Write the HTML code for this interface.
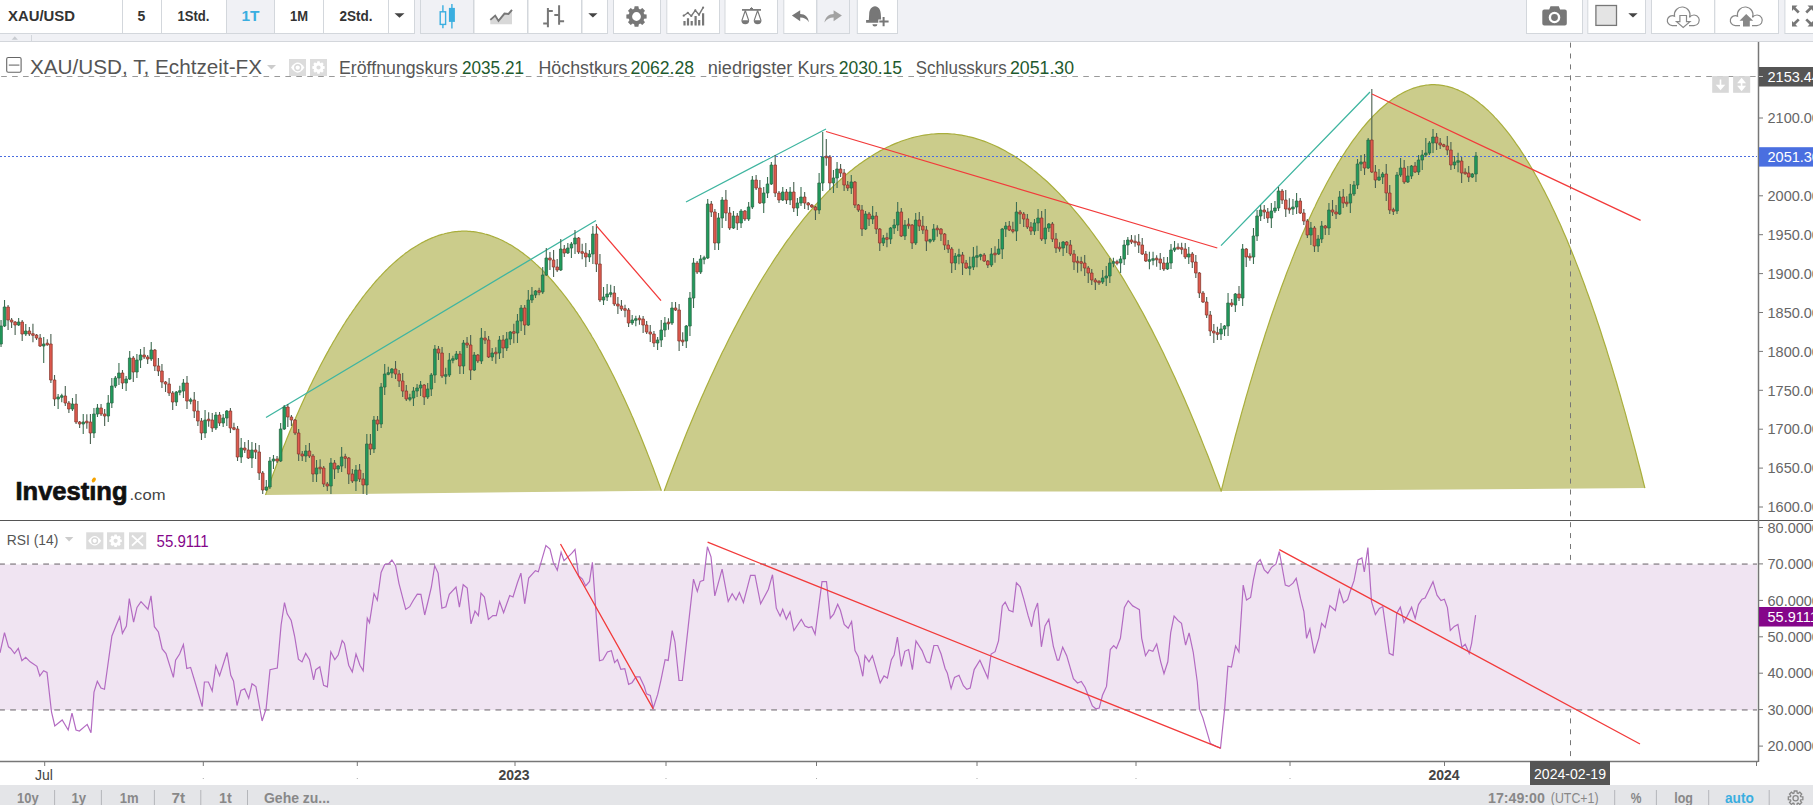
<!DOCTYPE html>
<html><head><meta charset="utf-8"><style>
html,body{margin:0;padding:0;width:1813px;height:805px;overflow:hidden;background:#fff;font-family:"Liberation Sans", sans-serif;}
.abs{position:absolute;}
</style></head><body>
<svg width="1813" height="805" viewBox="0 0 1813 805" style="position:absolute;left:0;top:0" font-family='"Liberation Sans", sans-serif'>
<rect x="0" y="42" width="1813" height="743" fill="#fff"/>
<!-- price pane -->
<path d="M0 76.5H1757" stroke="#999" stroke-width="1" stroke-dasharray="5.6,5.33" stroke-dashoffset="-1.2"/>
<path d="M265.5 495.0L267.1 490.4L268.8 485.8L270.4 481.3L272.1 476.8L273.7 472.4L275.4 468.0L277.0 463.7L278.7 459.4L280.3 455.1L282.0 450.9L283.6 446.8L285.3 442.7L286.9 438.6L288.6 434.6L290.2 430.6L291.9 426.7L293.5 422.8L295.2 419.0L296.8 415.2L298.5 411.4L300.1 407.7L301.8 404.0L303.4 400.4L305.1 396.8L306.7 393.3L308.4 389.8L310.0 386.3L311.7 382.9L313.3 379.6L315.0 376.2L316.6 372.9L318.3 369.7L319.9 366.5L321.6 363.3L323.2 360.2L324.9 357.1L326.5 354.1L328.2 351.1L329.8 348.1L331.5 345.2L333.1 342.3L334.8 339.5L336.4 336.7L338.1 333.9L339.7 331.2L341.4 328.5L343.0 325.9L344.7 323.3L346.3 320.7L348.0 318.2L349.6 315.7L351.3 313.3L352.9 310.8L354.6 308.5L356.2 306.1L357.9 303.8L359.5 301.6L361.2 299.4L362.8 297.2L364.5 295.0L366.1 292.9L367.8 290.8L369.4 288.8L371.1 286.8L372.7 284.8L374.4 282.9L376.0 281.0L377.7 279.2L379.3 277.4L381.0 275.6L382.6 273.8L384.3 272.1L385.9 270.5L387.6 268.8L389.2 267.2L390.9 265.6L392.5 264.1L394.2 262.6L395.8 261.2L397.5 259.7L399.1 258.4L400.8 257.0L402.4 255.7L404.1 254.4L405.7 253.1L407.4 251.9L409.0 250.8L410.7 249.6L412.3 248.5L414.0 247.4L415.6 246.4L417.3 245.4L418.9 244.4L420.6 243.5L422.2 242.6L423.9 241.7L425.5 240.9L427.2 240.1L428.8 239.3L430.5 238.6L432.1 237.9L433.8 237.2L435.4 236.6L437.1 236.0L438.7 235.4L440.4 234.9L442.0 234.4L443.7 234.0L445.3 233.5L447.0 233.2L448.6 232.8L450.3 232.5L451.9 232.2L453.6 231.9L455.2 231.7L456.9 231.6L458.5 231.4L460.2 231.3L461.8 231.2L463.4 231.2L465.1 231.2L466.7 231.2L468.4 231.3L470.0 231.4L471.7 231.6L473.3 231.7L475.0 231.9L476.6 232.2L478.3 232.5L479.9 232.8L481.6 233.1L483.2 233.5L484.9 234.0L486.5 234.4L488.2 234.9L489.8 235.4L491.5 236.0L493.1 236.6L494.8 237.2L496.4 237.9L498.1 238.5L499.7 239.3L501.4 240.0L503.0 240.8L504.7 241.7L506.3 242.5L508.0 243.4L509.6 244.4L511.3 245.3L512.9 246.3L514.6 247.4L516.2 248.5L517.9 249.6L519.5 250.7L521.2 251.9L522.8 253.1L524.5 254.4L526.1 255.6L527.8 257.0L529.4 258.3L531.1 259.7L532.7 261.1L534.4 262.6L536.0 264.1L537.7 265.6L539.3 267.2L541.0 268.8L542.6 270.4L544.3 272.1L545.9 273.8L547.6 275.5L549.2 277.3L550.9 279.1L552.5 281.0L554.2 282.9L555.8 284.8L557.5 286.8L559.1 288.8L560.8 290.8L562.4 292.9L564.1 295.0L565.7 297.1L567.4 299.3L569.0 301.5L570.7 303.8L572.3 306.1L574.0 308.4L575.6 310.8L577.3 313.2L578.9 315.7L580.6 318.2L582.2 320.7L583.9 323.3L585.5 325.9L587.2 328.5L588.8 331.2L590.5 333.9L592.1 336.7L593.8 339.5L595.4 342.3L597.1 345.2L598.7 348.2L600.4 351.1L602.0 354.1L603.7 357.2L605.3 360.2L607.0 363.4L608.6 366.5L610.3 369.8L611.9 373.0L613.6 376.3L615.2 379.6L616.9 383.0L618.5 386.4L620.2 389.9L621.8 393.4L623.5 396.9L625.1 400.5L626.8 404.2L628.4 407.8L630.1 411.5L631.7 415.3L633.4 419.1L635.0 423.0L636.7 426.9L638.3 430.8L640.0 434.8L641.6 438.8L643.3 442.9L644.9 447.0L646.6 451.2L648.2 455.4L649.9 459.6L651.5 463.9L653.2 468.3L654.8 472.7L656.5 477.1L658.1 481.6L659.8 486.1L661.4 490.7Z" fill="#cbcc8b"/><path d="M265.5 495.0L267.1 490.4L268.8 485.8L270.4 481.3L272.1 476.8L273.7 472.4L275.4 468.0L277.0 463.7L278.7 459.4L280.3 455.1L282.0 450.9L283.6 446.8L285.3 442.7L286.9 438.6L288.6 434.6L290.2 430.6L291.9 426.7L293.5 422.8L295.2 419.0L296.8 415.2L298.5 411.4L300.1 407.7L301.8 404.0L303.4 400.4L305.1 396.8L306.7 393.3L308.4 389.8L310.0 386.3L311.7 382.9L313.3 379.6L315.0 376.2L316.6 372.9L318.3 369.7L319.9 366.5L321.6 363.3L323.2 360.2L324.9 357.1L326.5 354.1L328.2 351.1L329.8 348.1L331.5 345.2L333.1 342.3L334.8 339.5L336.4 336.7L338.1 333.9L339.7 331.2L341.4 328.5L343.0 325.9L344.7 323.3L346.3 320.7L348.0 318.2L349.6 315.7L351.3 313.3L352.9 310.8L354.6 308.5L356.2 306.1L357.9 303.8L359.5 301.6L361.2 299.4L362.8 297.2L364.5 295.0L366.1 292.9L367.8 290.8L369.4 288.8L371.1 286.8L372.7 284.8L374.4 282.9L376.0 281.0L377.7 279.2L379.3 277.4L381.0 275.6L382.6 273.8L384.3 272.1L385.9 270.5L387.6 268.8L389.2 267.2L390.9 265.6L392.5 264.1L394.2 262.6L395.8 261.2L397.5 259.7L399.1 258.4L400.8 257.0L402.4 255.7L404.1 254.4L405.7 253.1L407.4 251.9L409.0 250.8L410.7 249.6L412.3 248.5L414.0 247.4L415.6 246.4L417.3 245.4L418.9 244.4L420.6 243.5L422.2 242.6L423.9 241.7L425.5 240.9L427.2 240.1L428.8 239.3L430.5 238.6L432.1 237.9L433.8 237.2L435.4 236.6L437.1 236.0L438.7 235.4L440.4 234.9L442.0 234.4L443.7 234.0L445.3 233.5L447.0 233.2L448.6 232.8L450.3 232.5L451.9 232.2L453.6 231.9L455.2 231.7L456.9 231.6L458.5 231.4L460.2 231.3L461.8 231.2L463.4 231.2L465.1 231.2L466.7 231.2L468.4 231.3L470.0 231.4L471.7 231.6L473.3 231.7L475.0 231.9L476.6 232.2L478.3 232.5L479.9 232.8L481.6 233.1L483.2 233.5L484.9 234.0L486.5 234.4L488.2 234.9L489.8 235.4L491.5 236.0L493.1 236.6L494.8 237.2L496.4 237.9L498.1 238.5L499.7 239.3L501.4 240.0L503.0 240.8L504.7 241.7L506.3 242.5L508.0 243.4L509.6 244.4L511.3 245.3L512.9 246.3L514.6 247.4L516.2 248.5L517.9 249.6L519.5 250.7L521.2 251.9L522.8 253.1L524.5 254.4L526.1 255.6L527.8 257.0L529.4 258.3L531.1 259.7L532.7 261.1L534.4 262.6L536.0 264.1L537.7 265.6L539.3 267.2L541.0 268.8L542.6 270.4L544.3 272.1L545.9 273.8L547.6 275.5L549.2 277.3L550.9 279.1L552.5 281.0L554.2 282.9L555.8 284.8L557.5 286.8L559.1 288.8L560.8 290.8L562.4 292.9L564.1 295.0L565.7 297.1L567.4 299.3L569.0 301.5L570.7 303.8L572.3 306.1L574.0 308.4L575.6 310.8L577.3 313.2L578.9 315.7L580.6 318.2L582.2 320.7L583.9 323.3L585.5 325.9L587.2 328.5L588.8 331.2L590.5 333.9L592.1 336.7L593.8 339.5L595.4 342.3L597.1 345.2L598.7 348.2L600.4 351.1L602.0 354.1L603.7 357.2L605.3 360.2L607.0 363.4L608.6 366.5L610.3 369.8L611.9 373.0L613.6 376.3L615.2 379.6L616.9 383.0L618.5 386.4L620.2 389.9L621.8 393.4L623.5 396.9L625.1 400.5L626.8 404.2L628.4 407.8L630.1 411.5L631.7 415.3L633.4 419.1L635.0 423.0L636.7 426.9L638.3 430.8L640.0 434.8L641.6 438.8L643.3 442.9L644.9 447.0L646.6 451.2L648.2 455.4L649.9 459.6L651.5 463.9L653.2 468.3L654.8 472.7L656.5 477.1L658.1 481.6L659.8 486.1L661.4 490.7" fill="none" stroke="#a9ae3c" stroke-width="1.2"/><path d="M664.2 491.0L666.5 484.7L668.8 478.5L671.2 472.3L673.5 466.2L675.8 460.2L678.1 454.3L680.5 448.4L682.8 442.5L685.1 436.7L687.4 431.0L689.7 425.4L692.1 419.8L694.4 414.3L696.7 408.8L699.0 403.4L701.3 398.0L703.7 392.8L706.0 387.5L708.3 382.4L710.6 377.3L713.0 372.2L715.3 367.2L717.6 362.3L719.9 357.4L722.2 352.6L724.6 347.9L726.9 343.2L729.2 338.5L731.5 334.0L733.9 329.4L736.2 325.0L738.5 320.6L740.8 316.2L743.1 311.9L745.5 307.7L747.8 303.5L750.1 299.4L752.4 295.3L754.7 291.3L757.1 287.3L759.4 283.4L761.7 279.5L764.0 275.7L766.4 272.0L768.7 268.3L771.0 264.7L773.3 261.1L775.6 257.5L778.0 254.1L780.3 250.6L782.6 247.3L784.9 243.9L787.2 240.7L789.6 237.5L791.9 234.3L794.2 231.2L796.5 228.1L798.9 225.1L801.2 222.1L803.5 219.2L805.8 216.4L808.1 213.6L810.5 210.8L812.8 208.1L815.1 205.4L817.4 202.8L819.8 200.3L822.1 197.8L824.4 195.3L826.7 192.9L829.0 190.6L831.4 188.2L833.7 186.0L836.0 183.8L838.3 181.6L840.6 179.5L843.0 177.4L845.3 175.4L847.6 173.5L849.9 171.5L852.3 169.7L854.6 167.8L856.9 166.1L859.2 164.3L861.5 162.7L863.9 161.0L866.2 159.4L868.5 157.9L870.8 156.4L873.2 155.0L875.5 153.6L877.8 152.2L880.1 150.9L882.4 149.7L884.8 148.5L887.1 147.3L889.4 146.2L891.7 145.1L894.0 144.1L896.4 143.1L898.7 142.2L901.0 141.3L903.3 140.5L905.7 139.7L908.0 139.0L910.3 138.3L912.6 137.6L914.9 137.0L917.3 136.5L919.6 136.0L921.9 135.5L924.2 135.1L926.5 134.8L928.9 134.5L931.2 134.2L933.5 134.0L935.8 133.8L938.2 133.7L940.5 133.6L942.8 133.6L945.1 133.6L947.4 133.7L949.8 133.8L952.1 134.0L954.4 134.2L956.7 134.5L959.1 134.8L961.4 135.2L963.7 135.6L966.0 136.0L968.3 136.6L970.7 137.1L973.0 137.7L975.3 138.4L977.6 139.1L979.9 139.8L982.3 140.6L984.6 141.4L986.9 142.3L989.2 143.2L991.6 144.2L993.9 145.2L996.2 146.3L998.5 147.4L1000.8 148.6L1003.2 149.8L1005.5 151.1L1007.8 152.4L1010.1 153.7L1012.5 155.1L1014.8 156.6L1017.1 158.1L1019.4 159.6L1021.7 161.2L1024.1 162.8L1026.4 164.5L1028.7 166.3L1031.0 168.0L1033.3 169.9L1035.7 171.7L1038.0 173.7L1040.3 175.6L1042.6 177.7L1045.0 179.7L1047.3 181.8L1049.6 184.0L1051.9 186.2L1054.2 188.5L1056.6 190.8L1058.9 193.2L1061.2 195.6L1063.5 198.0L1065.8 200.6L1068.2 203.1L1070.5 205.7L1072.8 208.4L1075.1 211.1L1077.5 213.9L1079.8 216.7L1082.1 219.5L1084.4 222.4L1086.7 225.4L1089.1 228.4L1091.4 231.5L1093.7 234.6L1096.0 237.8L1098.4 241.0L1100.7 244.3L1103.0 247.6L1105.3 251.0L1107.6 254.4L1110.0 257.9L1112.3 261.4L1114.6 265.0L1116.9 268.7L1119.2 272.4L1121.6 276.1L1123.9 279.9L1126.2 283.8L1128.5 287.7L1130.9 291.7L1133.2 295.7L1135.5 299.8L1137.8 303.9L1140.1 308.1L1142.5 312.3L1144.8 316.6L1147.1 321.0L1149.4 325.4L1151.8 329.9L1154.1 334.4L1156.4 339.0L1158.7 343.6L1161.0 348.3L1163.4 353.1L1165.7 357.9L1168.0 362.8L1170.3 367.7L1172.6 372.7L1175.0 377.8L1177.3 382.9L1179.6 388.0L1181.9 393.3L1184.3 398.6L1186.6 403.9L1188.9 409.3L1191.2 414.8L1193.5 420.3L1195.9 425.9L1198.2 431.6L1200.5 437.3L1202.8 443.1L1205.1 448.9L1207.5 454.8L1209.8 460.8L1212.1 466.8L1214.4 472.9L1216.8 479.1L1219.1 485.3L1221.4 491.6Z" fill="#cbcc8b"/><path d="M664.2 491.0L666.5 484.7L668.8 478.5L671.2 472.3L673.5 466.2L675.8 460.2L678.1 454.3L680.5 448.4L682.8 442.5L685.1 436.7L687.4 431.0L689.7 425.4L692.1 419.8L694.4 414.3L696.7 408.8L699.0 403.4L701.3 398.0L703.7 392.8L706.0 387.5L708.3 382.4L710.6 377.3L713.0 372.2L715.3 367.2L717.6 362.3L719.9 357.4L722.2 352.6L724.6 347.9L726.9 343.2L729.2 338.5L731.5 334.0L733.9 329.4L736.2 325.0L738.5 320.6L740.8 316.2L743.1 311.9L745.5 307.7L747.8 303.5L750.1 299.4L752.4 295.3L754.7 291.3L757.1 287.3L759.4 283.4L761.7 279.5L764.0 275.7L766.4 272.0L768.7 268.3L771.0 264.7L773.3 261.1L775.6 257.5L778.0 254.1L780.3 250.6L782.6 247.3L784.9 243.9L787.2 240.7L789.6 237.5L791.9 234.3L794.2 231.2L796.5 228.1L798.9 225.1L801.2 222.1L803.5 219.2L805.8 216.4L808.1 213.6L810.5 210.8L812.8 208.1L815.1 205.4L817.4 202.8L819.8 200.3L822.1 197.8L824.4 195.3L826.7 192.9L829.0 190.6L831.4 188.2L833.7 186.0L836.0 183.8L838.3 181.6L840.6 179.5L843.0 177.4L845.3 175.4L847.6 173.5L849.9 171.5L852.3 169.7L854.6 167.8L856.9 166.1L859.2 164.3L861.5 162.7L863.9 161.0L866.2 159.4L868.5 157.9L870.8 156.4L873.2 155.0L875.5 153.6L877.8 152.2L880.1 150.9L882.4 149.7L884.8 148.5L887.1 147.3L889.4 146.2L891.7 145.1L894.0 144.1L896.4 143.1L898.7 142.2L901.0 141.3L903.3 140.5L905.7 139.7L908.0 139.0L910.3 138.3L912.6 137.6L914.9 137.0L917.3 136.5L919.6 136.0L921.9 135.5L924.2 135.1L926.5 134.8L928.9 134.5L931.2 134.2L933.5 134.0L935.8 133.8L938.2 133.7L940.5 133.6L942.8 133.6L945.1 133.6L947.4 133.7L949.8 133.8L952.1 134.0L954.4 134.2L956.7 134.5L959.1 134.8L961.4 135.2L963.7 135.6L966.0 136.0L968.3 136.6L970.7 137.1L973.0 137.7L975.3 138.4L977.6 139.1L979.9 139.8L982.3 140.6L984.6 141.4L986.9 142.3L989.2 143.2L991.6 144.2L993.9 145.2L996.2 146.3L998.5 147.4L1000.8 148.6L1003.2 149.8L1005.5 151.1L1007.8 152.4L1010.1 153.7L1012.5 155.1L1014.8 156.6L1017.1 158.1L1019.4 159.6L1021.7 161.2L1024.1 162.8L1026.4 164.5L1028.7 166.3L1031.0 168.0L1033.3 169.9L1035.7 171.7L1038.0 173.7L1040.3 175.6L1042.6 177.7L1045.0 179.7L1047.3 181.8L1049.6 184.0L1051.9 186.2L1054.2 188.5L1056.6 190.8L1058.9 193.2L1061.2 195.6L1063.5 198.0L1065.8 200.6L1068.2 203.1L1070.5 205.7L1072.8 208.4L1075.1 211.1L1077.5 213.9L1079.8 216.7L1082.1 219.5L1084.4 222.4L1086.7 225.4L1089.1 228.4L1091.4 231.5L1093.7 234.6L1096.0 237.8L1098.4 241.0L1100.7 244.3L1103.0 247.6L1105.3 251.0L1107.6 254.4L1110.0 257.9L1112.3 261.4L1114.6 265.0L1116.9 268.7L1119.2 272.4L1121.6 276.1L1123.9 279.9L1126.2 283.8L1128.5 287.7L1130.9 291.7L1133.2 295.7L1135.5 299.8L1137.8 303.9L1140.1 308.1L1142.5 312.3L1144.8 316.6L1147.1 321.0L1149.4 325.4L1151.8 329.9L1154.1 334.4L1156.4 339.0L1158.7 343.6L1161.0 348.3L1163.4 353.1L1165.7 357.9L1168.0 362.8L1170.3 367.7L1172.6 372.7L1175.0 377.8L1177.3 382.9L1179.6 388.0L1181.9 393.3L1184.3 398.6L1186.6 403.9L1188.9 409.3L1191.2 414.8L1193.5 420.3L1195.9 425.9L1198.2 431.6L1200.5 437.3L1202.8 443.1L1205.1 448.9L1207.5 454.8L1209.8 460.8L1212.1 466.8L1214.4 472.9L1216.8 479.1L1219.1 485.3L1221.4 491.6" fill="none" stroke="#a9ae3c" stroke-width="1.2"/><path d="M1221.2 491.0L1223.0 483.9L1224.7 476.8L1226.5 469.8L1228.3 462.9L1230.0 456.1L1231.8 449.3L1233.6 442.6L1235.3 436.0L1237.1 429.5L1238.9 423.0L1240.6 416.6L1242.4 410.2L1244.2 404.0L1245.9 397.7L1247.7 391.6L1249.4 385.6L1251.2 379.6L1253.0 373.6L1254.7 367.8L1256.5 362.0L1258.3 356.2L1260.0 350.6L1261.8 345.0L1263.6 339.5L1265.3 334.0L1267.1 328.6L1268.9 323.3L1270.6 318.0L1272.4 312.8L1274.2 307.7L1275.9 302.6L1277.7 297.6L1279.5 292.7L1281.2 287.8L1283.0 283.0L1284.8 278.2L1286.5 273.5L1288.3 268.9L1290.1 264.4L1291.8 259.9L1293.6 255.4L1295.3 251.0L1297.1 246.7L1298.9 242.5L1300.6 238.3L1302.4 234.1L1304.2 230.1L1305.9 226.1L1307.7 222.1L1309.5 218.2L1311.2 214.4L1313.0 210.6L1314.8 206.9L1316.5 203.2L1318.3 199.6L1320.1 196.1L1321.8 192.6L1323.6 189.2L1325.4 185.8L1327.1 182.5L1328.9 179.3L1330.7 176.1L1332.4 172.9L1334.2 169.9L1336.0 166.8L1337.7 163.9L1339.5 161.0L1341.2 158.1L1343.0 155.3L1344.8 152.6L1346.5 149.9L1348.3 147.3L1350.1 144.7L1351.8 142.2L1353.6 139.7L1355.4 137.3L1357.1 135.0L1358.9 132.7L1360.7 130.4L1362.4 128.2L1364.2 126.1L1366.0 124.0L1367.7 122.0L1369.5 120.0L1371.3 118.1L1373.0 116.2L1374.8 114.4L1376.6 112.7L1378.3 111.0L1380.1 109.3L1381.9 107.7L1383.6 106.2L1385.4 104.7L1387.1 103.3L1388.9 101.9L1390.7 100.6L1392.4 99.3L1394.2 98.1L1396.0 96.9L1397.7 95.8L1399.5 94.7L1401.3 93.7L1403.0 92.8L1404.8 91.9L1406.6 91.0L1408.3 90.2L1410.1 89.5L1411.9 88.8L1413.6 88.1L1415.4 87.6L1417.2 87.0L1418.9 86.6L1420.7 86.1L1422.5 85.8L1424.2 85.5L1426.0 85.2L1427.8 85.0L1429.5 84.8L1431.3 84.7L1433.1 84.7L1434.8 84.7L1436.6 84.8L1438.3 84.9L1440.1 85.1L1441.9 85.3L1443.6 85.6L1445.4 86.0L1447.2 86.4L1448.9 86.8L1450.7 87.3L1452.5 87.9L1454.2 88.5L1456.0 89.2L1457.8 89.9L1459.5 90.7L1461.3 91.5L1463.1 92.4L1464.8 93.3L1466.6 94.3L1468.4 95.3L1470.1 96.4L1471.9 97.5L1473.7 98.7L1475.4 100.0L1477.2 101.3L1479.0 102.7L1480.7 104.1L1482.5 105.5L1484.2 107.0L1486.0 108.6L1487.8 110.2L1489.5 111.9L1491.3 113.6L1493.1 115.4L1494.8 117.3L1496.6 119.2L1498.4 121.1L1500.1 123.1L1501.9 125.2L1503.7 127.3L1505.4 129.4L1507.2 131.6L1509.0 133.9L1510.7 136.2L1512.5 138.6L1514.3 141.1L1516.0 143.6L1517.8 146.1L1519.6 148.7L1521.3 151.4L1523.1 154.1L1524.9 156.9L1526.6 159.7L1528.4 162.6L1530.1 165.5L1531.9 168.5L1533.7 171.6L1535.4 174.7L1537.2 177.8L1539.0 181.1L1540.7 184.3L1542.5 187.7L1544.3 191.1L1546.0 194.5L1547.8 198.1L1549.6 201.6L1551.3 205.3L1553.1 209.0L1554.9 212.7L1556.6 216.5L1558.4 220.4L1560.2 224.3L1561.9 228.3L1563.7 232.4L1565.5 236.5L1567.2 240.6L1569.0 244.9L1570.8 249.2L1572.5 253.5L1574.3 257.9L1576.0 262.4L1577.8 266.9L1579.6 271.5L1581.3 276.2L1583.1 280.9L1584.9 285.7L1586.6 290.6L1588.4 295.5L1590.2 300.5L1591.9 305.5L1593.7 310.6L1595.5 315.8L1597.2 321.0L1599.0 326.3L1600.8 331.7L1602.5 337.2L1604.3 342.7L1606.1 348.2L1607.8 353.9L1609.6 359.6L1611.4 365.3L1613.1 371.2L1614.9 377.1L1616.7 383.0L1618.4 389.1L1620.2 395.2L1621.9 401.4L1623.7 407.6L1625.5 413.9L1627.2 420.3L1629.0 426.8L1630.8 433.3L1632.5 439.9L1634.3 446.6L1636.1 453.3L1637.8 460.1L1639.6 467.0L1641.4 474.0L1643.1 481.0L1644.9 488.1Z" fill="#cbcc8b"/><path d="M1221.2 491.0L1223.0 483.9L1224.7 476.8L1226.5 469.8L1228.3 462.9L1230.0 456.1L1231.8 449.3L1233.6 442.6L1235.3 436.0L1237.1 429.5L1238.9 423.0L1240.6 416.6L1242.4 410.2L1244.2 404.0L1245.9 397.7L1247.7 391.6L1249.4 385.6L1251.2 379.6L1253.0 373.6L1254.7 367.8L1256.5 362.0L1258.3 356.2L1260.0 350.6L1261.8 345.0L1263.6 339.5L1265.3 334.0L1267.1 328.6L1268.9 323.3L1270.6 318.0L1272.4 312.8L1274.2 307.7L1275.9 302.6L1277.7 297.6L1279.5 292.7L1281.2 287.8L1283.0 283.0L1284.8 278.2L1286.5 273.5L1288.3 268.9L1290.1 264.4L1291.8 259.9L1293.6 255.4L1295.3 251.0L1297.1 246.7L1298.9 242.5L1300.6 238.3L1302.4 234.1L1304.2 230.1L1305.9 226.1L1307.7 222.1L1309.5 218.2L1311.2 214.4L1313.0 210.6L1314.8 206.9L1316.5 203.2L1318.3 199.6L1320.1 196.1L1321.8 192.6L1323.6 189.2L1325.4 185.8L1327.1 182.5L1328.9 179.3L1330.7 176.1L1332.4 172.9L1334.2 169.9L1336.0 166.8L1337.7 163.9L1339.5 161.0L1341.2 158.1L1343.0 155.3L1344.8 152.6L1346.5 149.9L1348.3 147.3L1350.1 144.7L1351.8 142.2L1353.6 139.7L1355.4 137.3L1357.1 135.0L1358.9 132.7L1360.7 130.4L1362.4 128.2L1364.2 126.1L1366.0 124.0L1367.7 122.0L1369.5 120.0L1371.3 118.1L1373.0 116.2L1374.8 114.4L1376.6 112.7L1378.3 111.0L1380.1 109.3L1381.9 107.7L1383.6 106.2L1385.4 104.7L1387.1 103.3L1388.9 101.9L1390.7 100.6L1392.4 99.3L1394.2 98.1L1396.0 96.9L1397.7 95.8L1399.5 94.7L1401.3 93.7L1403.0 92.8L1404.8 91.9L1406.6 91.0L1408.3 90.2L1410.1 89.5L1411.9 88.8L1413.6 88.1L1415.4 87.6L1417.2 87.0L1418.9 86.6L1420.7 86.1L1422.5 85.8L1424.2 85.5L1426.0 85.2L1427.8 85.0L1429.5 84.8L1431.3 84.7L1433.1 84.7L1434.8 84.7L1436.6 84.8L1438.3 84.9L1440.1 85.1L1441.9 85.3L1443.6 85.6L1445.4 86.0L1447.2 86.4L1448.9 86.8L1450.7 87.3L1452.5 87.9L1454.2 88.5L1456.0 89.2L1457.8 89.9L1459.5 90.7L1461.3 91.5L1463.1 92.4L1464.8 93.3L1466.6 94.3L1468.4 95.3L1470.1 96.4L1471.9 97.5L1473.7 98.7L1475.4 100.0L1477.2 101.3L1479.0 102.7L1480.7 104.1L1482.5 105.5L1484.2 107.0L1486.0 108.6L1487.8 110.2L1489.5 111.9L1491.3 113.6L1493.1 115.4L1494.8 117.3L1496.6 119.2L1498.4 121.1L1500.1 123.1L1501.9 125.2L1503.7 127.3L1505.4 129.4L1507.2 131.6L1509.0 133.9L1510.7 136.2L1512.5 138.6L1514.3 141.1L1516.0 143.6L1517.8 146.1L1519.6 148.7L1521.3 151.4L1523.1 154.1L1524.9 156.9L1526.6 159.7L1528.4 162.6L1530.1 165.5L1531.9 168.5L1533.7 171.6L1535.4 174.7L1537.2 177.8L1539.0 181.1L1540.7 184.3L1542.5 187.7L1544.3 191.1L1546.0 194.5L1547.8 198.1L1549.6 201.6L1551.3 205.3L1553.1 209.0L1554.9 212.7L1556.6 216.5L1558.4 220.4L1560.2 224.3L1561.9 228.3L1563.7 232.4L1565.5 236.5L1567.2 240.6L1569.0 244.9L1570.8 249.2L1572.5 253.5L1574.3 257.9L1576.0 262.4L1577.8 266.9L1579.6 271.5L1581.3 276.2L1583.1 280.9L1584.9 285.7L1586.6 290.6L1588.4 295.5L1590.2 300.5L1591.9 305.5L1593.7 310.6L1595.5 315.8L1597.2 321.0L1599.0 326.3L1600.8 331.7L1602.5 337.2L1604.3 342.7L1606.1 348.2L1607.8 353.9L1609.6 359.6L1611.4 365.3L1613.1 371.2L1614.9 377.1L1616.7 383.0L1618.4 389.1L1620.2 395.2L1621.9 401.4L1623.7 407.6L1625.5 413.9L1627.2 420.3L1629.0 426.8L1630.8 433.3L1632.5 439.9L1634.3 446.6L1636.1 453.3L1637.8 460.1L1639.6 467.0L1641.4 474.0L1643.1 481.0L1644.9 488.1" fill="none" stroke="#a9ae3c" stroke-width="1.2"/>
<path d="M0 156.5H1757" stroke="#4a6de0" stroke-width="1" stroke-dasharray="2,2"/>
<path d="M1570.5 42.6V761" stroke="#777" stroke-width="1" stroke-dasharray="5,5.9"/>
<path d="M266 417.5L596 220.5M686 202L826 129M1221 245.6L1370 92" stroke="#3fb5a0" stroke-width="1.3" fill="none"/>
<path d="M1.04 320.0V347.0M4.53 300.0V327.0M18.64 318.0V326.0M25.78 324.0V336.0M43.71 337.0V363.0M58.12 394.0V409.0M61.76 393.7V402.3M72.47 398.0V411.0M83.24 414.0V434.0M93.94 408.0V438.0M97.47 404.0V417.0M108.24 395.0V422.0M111.82 378.0V408.0M115.35 376.0V388.0M118.94 363.0V385.0M126.12 376.0V391.0M129.71 351.0V380.0M136.88 354.0V378.0M140.53 349.0V368.0M151.24 342.0V361.0M176.29 391.0V406.0M179.82 385.7V395.3M183.41 379.0V398.0M190.65 397.7V404.3M205.06 410.0V438.0M215.88 412.0V430.0M223.18 414.0V427.0M226.82 410.0V426.0M241.18 438.0V463.0M251.94 442.0V468.0M266.29 480.0V491.0M269.88 457.0V489.0M273.47 455.0V469.0M280.65 423.0V462.0M284.24 405.0V430.0M305.82 445.0V462.0M316.53 460.0V482.0M330.94 458.0V494.0M338.12 465.0V473.0M341.65 447.0V472.0M355.94 465.0V491.0M366.82 434.0V495.0M373.94 416.0V453.0M381.12 383.0V428.0M384.71 364.0V395.0M388.29 366.7V375.3M391.88 368.0V378.0M409.88 393.7V401.3M413.47 387.0V406.0M417.06 384.0V397.0M420.59 381.0V396.0M427.71 383.0V399.0M431.29 373.0V396.0M434.88 345.0V383.0M445.71 367.7V384.3M449.35 353.0V377.0M452.88 355.7V363.3M456.35 351.0V360.0M463.47 340.0V374.0M474.24 352.0V371.0M481.41 328.0V364.0M492.18 348.0V361.0M499.47 336.0V359.0M506.71 332.0V351.0M510.24 331.0V345.0M517.47 314.0V343.0M521.12 305.0V331.0M528.29 290.0V326.0M531.94 287.0V303.0M535.53 290.0V298.0M542.71 267.0V294.0M546.29 248.0V276.0M560.76 239.0V271.0M567.82 243.0V254.0M571.41 242.0V258.0M575.00 230.0V254.0M589.41 250.0V262.0M592.88 226.0V264.0M603.53 287.0V305.0M607.12 284.0V301.0M610.71 284.7V297.3M632.18 315.0V325.0M635.82 315.7V326.3M657.59 337.0V350.0M661.24 320.0V347.0M664.88 317.0V337.0M672.00 302.0V325.0M686.29 325.0V348.0M689.94 292.0V336.0M693.53 258.0V308.0M700.65 255.0V274.0M704.12 255.7V264.3M707.71 199.0V259.0M718.53 213.0V250.0M722.18 197.0V228.0M733.47 211.0V229.0M741.06 209.0V228.0M748.65 202.0V221.0M752.35 176.0V209.0M763.71 187.0V213.0M767.53 177.0V198.0M771.35 162.0V185.0M782.76 187.0V201.0M790.12 187.0V205.0M797.41 198.0V216.0M801.00 187.0V206.0M819.12 173.0V214.0M822.71 132.0V191.0M833.47 170.0V193.0M837.06 162.0V188.0M851.29 175.0V194.0M865.53 211.0V230.0M872.65 206.0V224.0M883.35 235.0V246.0M890.59 227.0V244.0M894.18 219.0V234.0M897.71 202.0V231.0M904.94 220.0V240.0M915.71 213.0V245.0M930.06 238.7V243.3M933.71 224.0V242.0M955.29 253.0V270.0M958.94 248.7V264.3M969.76 256.7V275.3M973.41 247.0V270.0M976.94 245.7V267.3M980.53 253.7V260.3M991.41 248.0V267.0M998.65 239.0V255.0M1002.24 228.0V259.0M1005.76 222.0V237.0M1016.47 202.0V241.0M1034.47 219.0V235.0M1038.06 209.0V231.0M1045.24 209.0V244.0M1048.82 223.0V232.0M1063.12 241.0V256.0M1102.65 270.0V284.0M1106.24 266.0V286.0M1109.82 258.0V283.0M1113.41 257.7V267.3M1120.59 256.0V273.0M1124.18 240.0V265.0M1127.82 237.0V255.0M1149.41 251.7V269.3M1153.06 251.7V265.3M1167.47 257.0V270.0M1171.00 244.0V269.0M1174.53 241.0V252.0M1188.76 247.0V264.0M1221.00 323.0V340.0M1224.53 325.0V336.0M1228.06 293.0V336.0M1235.35 293.0V312.0M1242.65 244.0V306.0M1253.47 228.0V264.0M1257.06 210.0V241.0M1260.65 205.0V221.0M1271.35 203.0V228.0M1274.94 201.0V213.0M1278.53 187.0V211.0M1292.94 199.0V215.0M1296.59 193.0V214.0M1310.88 222.0V245.0M1318.12 235.0V252.0M1321.71 221.0V243.0M1328.94 203.0V235.0M1339.65 191.0V215.0M1350.35 184.0V213.0M1353.94 181.0V196.0M1357.53 159.0V189.0M1361.00 155.0V171.0M1368.18 138.0V169.0M1379.00 169.0V181.0M1382.65 172.0V184.0M1397.00 172.0V214.0M1400.59 158.0V177.0M1407.82 166.0V183.0M1411.47 165.0V179.0M1418.59 155.0V175.0M1422.24 150.0V170.0M1425.82 138.0V157.0M1429.41 141.0V155.0M1433.00 129.0V153.0M1454.50 156.0V169.0M1458.06 152.7V172.3M1472.32 173.0V178.0M1475.96 152.0V182.0" stroke="#3d6e52" stroke-width="1.1" fill="none"/><path d="M8.08 305.0V330.0M11.60 318.0V328.0M15.12 321.0V335.0M22.19 320.0V341.0M29.35 327.0V336.0M32.94 323.7V342.3M36.53 334.0V340.0M40.12 334.0V347.0M47.29 339.2V345.8M50.88 334.0V383.0M54.53 375.0V406.0M65.29 386.0V406.0M68.88 401.0V413.0M76.06 394.0V424.0M79.65 421.0V428.0M86.82 414.2V428.8M90.41 414.0V444.0M101.06 404.0V416.0M104.65 409.0V426.0M122.47 370.0V389.0M133.29 356.0V382.0M144.12 347.0V359.0M147.65 355.0V364.0M154.82 349.0V371.0M158.41 358.0V376.0M161.94 364.0V388.0M165.53 381.0V392.0M169.12 378.0V396.0M172.71 391.0V410.0M187.00 376.0V409.0M194.24 392.0V418.0M197.88 401.0V426.0M201.47 418.0V440.0M208.65 412.2V426.8M212.24 413.0V432.0M219.53 412.0V426.0M230.41 408.0V433.0M233.94 422.7V430.3M237.53 426.0V461.0M244.76 442.0V453.0M248.35 440.0V459.0M255.59 443.0V459.0M259.18 445.0V480.0M262.71 471.0V494.0M277.06 456.0V463.0M287.82 404.0V427.0M291.41 415.0V426.0M295.06 419.0V435.0M298.65 429.0V461.0M302.24 451.0V461.0M309.41 443.0V458.0M313.00 454.0V482.0M320.12 459.2V473.8M323.71 466.0V487.0M327.29 482.0V491.0M334.53 460.0V479.0M345.24 453.7V468.3M348.76 457.0V484.0M352.35 469.0V483.0M359.59 464.0V482.0M363.18 473.0V494.0M370.41 434.0V455.0M377.53 416.0V431.0M395.53 361.0V379.0M399.12 370.0V387.0M402.71 373.0V397.0M406.29 385.0V401.0M424.18 384.0V405.0M438.47 346.0V360.0M442.06 347.0V378.0M459.88 351.0V374.0M467.06 337.0V348.0M470.65 335.0V380.0M477.82 354.0V363.0M485.00 331.0V344.0M488.59 336.0V358.0M495.82 347.2V363.8M503.12 335.0V358.0M513.82 323.7V343.3M524.71 305.0V335.0M539.12 287.7V295.3M549.94 252.0V270.0M553.59 250.0V277.0M557.18 259.0V272.0M564.29 245.0V257.0M578.59 237.0V254.0M582.18 243.7V259.3M585.82 243.0V267.0M596.41 224.0V272.0M599.94 254.0V302.0M614.29 286.0V306.0M617.88 297.0V314.0M621.41 300.0V311.0M625.00 304.7V317.3M628.59 308.0V327.0M639.47 315.2V324.8M643.12 316.0V333.0M646.65 321.0V334.0M650.24 325.0V342.0M653.94 331.0V347.0M668.47 318.2V329.8M675.53 302.0V311.0M679.12 304.0V351.0M682.71 332.2V346.0M697.12 261.0V274.0M711.29 201.0V217.0M714.88 209.0V250.0M725.88 190.0V221.0M729.65 207.0V230.0M737.29 213.0V230.0M744.88 210.0V221.0M756.12 175.0V190.0M759.88 180.0V204.0M775.18 155.0V197.0M779.00 191.0V203.0M786.47 189.0V204.0M793.76 182.0V212.0M804.65 192.0V209.0M808.24 202.0V210.0M811.82 204.0V208.0M815.47 206.0V220.0M826.29 139.0V165.8M829.88 155.0V190.0M840.59 164.0V177.0M844.12 169.0V191.0M847.71 181.0V191.0M854.88 181.0V208.0M858.41 204.0V212.0M862.00 205.0V236.0M869.06 212.0V226.0M876.24 212.0V234.0M879.76 228.0V251.0M886.94 232.7V247.3M901.29 208.0V237.0M908.53 218.2V228.8M912.12 224.0V249.0M919.29 212.0V231.0M922.82 216.0V234.0M926.41 226.0V251.0M937.29 225.2V236.8M940.94 228.0V241.0M944.59 233.0V250.0M948.18 240.0V253.0M951.71 247.0V273.0M962.53 252.0V275.0M966.12 260.0V269.0M984.18 253.0V262.0M987.82 260.0V268.0M995.00 246.2V262.8M1009.29 221.0V231.0M1012.88 221.7V233.3M1020.06 210.0V224.0M1023.71 212.0V227.0M1027.35 214.0V229.0M1030.94 222.0V235.0M1041.65 211.0V241.0M1052.41 222.0V242.0M1056.00 233.0V253.0M1059.53 242.2V251.8M1066.71 241.0V253.0M1070.35 240.0V256.0M1074.00 250.0V270.0M1077.59 256.2V272.8M1081.18 256.7V271.3M1084.71 255.0V276.0M1088.24 266.0V283.0M1091.76 269.0V285.0M1095.35 278.0V290.0M1099.00 280.2V285.0M1117.00 259.7V265.3M1131.47 235.0V244.0M1135.06 235.2V246.8M1138.71 234.0V253.0M1142.24 238.0V255.0M1145.82 251.0V262.0M1156.65 255.2V266.8M1160.24 253.0V270.0M1163.82 257.0V271.0M1178.06 243.2V249.8M1181.65 242.7V254.3M1185.24 243.0V259.0M1192.29 252.0V268.0M1195.82 255.0V278.0M1199.35 272.0V298.0M1203.00 291.0V303.0M1206.65 297.0V318.0M1210.24 311.0V336.0M1213.82 324.0V343.0M1217.41 326.7V340.0M1231.71 299.0V307.0M1239.00 286.0V301.0M1246.24 248.0V267.0M1249.88 253.2V260.8M1264.24 205.0V219.0M1267.76 208.0V223.0M1282.12 189.0V204.0M1285.76 190.0V217.0M1289.35 198.2V213.8M1300.24 198.0V214.0M1303.82 209.0V225.0M1307.35 219.0V238.0M1314.47 226.0V252.0M1325.29 225.0V235.0M1332.53 200.0V216.0M1336.06 205.0V219.0M1343.24 189.0V208.0M1346.76 196.2V206.8M1364.53 154.0V175.0M1371.82 89.0V173.0M1375.41 165.0V188.0M1386.24 164.0V201.0M1389.76 185.0V214.0M1393.35 207.7V215.0M1404.18 160.0V184.0M1415.06 162.0V173.0M1436.59 133.0V150.0M1440.18 138.0V149.0M1443.71 143.7V147.3M1447.29 136.0V155.0M1450.91 142.0V170.0M1461.63 157.0V183.0M1465.16 168.2V174.8M1468.70 166.0V182.0" stroke="#4a6050" stroke-width="1.1" fill="none"/><path d="M-0.26 326.0h2.6v18.0h-2.6zM3.23 307.0h2.6v19.0h-2.6zM17.34 322.0h2.6v3.0h-2.6zM24.48 331.0h2.6v3.0h-2.6zM42.41 344.0h2.6v2.0h-2.6zM56.82 397.0h2.6v2.0h-2.6zM60.46 395.7h2.6v1.6h-2.6zM71.17 404.0h2.6v5.0h-2.6zM81.94 422.0h2.6v2.0h-2.6zM92.64 414.0h2.6v19.0h-2.6zM96.17 408.0h2.6v6.0h-2.6zM106.94 403.0h2.6v13.0h-2.6zM110.52 386.0h2.6v17.0h-2.6zM114.05 378.0h2.6v8.0h-2.6zM117.64 373.0h2.6v5.0h-2.6zM124.82 379.0h2.6v4.0h-2.6zM128.41 358.0h2.6v21.0h-2.6zM135.58 360.0h2.6v12.0h-2.6zM139.23 355.0h2.6v5.0h-2.6zM149.94 350.0h2.6v9.0h-2.6zM174.99 392.0h2.6v10.0h-2.6zM178.52 390.7h2.6v1.6h-2.6zM182.11 383.0h2.6v8.0h-2.6zM189.35 399.7h2.6v1.6h-2.6zM203.76 420.0h2.6v13.0h-2.6zM214.58 415.0h2.6v13.0h-2.6zM221.88 418.0h2.6v5.0h-2.6zM225.52 411.0h2.6v7.0h-2.6zM239.88 448.0h2.6v9.0h-2.6zM250.64 450.0h2.6v8.0h-2.6zM264.99 487.0h2.6v3.0h-2.6zM268.58 461.0h2.6v26.0h-2.6zM272.17 459.0h2.6v2.0h-2.6zM279.35 429.0h2.6v32.0h-2.6zM282.94 407.0h2.6v22.0h-2.6zM304.52 451.0h2.6v5.0h-2.6zM315.23 468.0h2.6v6.0h-2.6zM329.64 463.0h2.6v23.0h-2.6zM336.82 466.0h2.6v3.0h-2.6zM340.35 457.0h2.6v9.0h-2.6zM354.64 470.0h2.6v11.0h-2.6zM365.52 444.0h2.6v41.0h-2.6zM372.64 420.0h2.6v29.0h-2.6zM379.82 387.0h2.6v37.0h-2.6zM383.41 374.0h2.6v13.0h-2.6zM386.99 372.7h2.6v1.6h-2.6zM390.58 369.0h2.6v4.0h-2.6zM408.58 397.7h2.6v1.6h-2.6zM412.17 391.0h2.6v7.0h-2.6zM415.76 388.0h2.6v3.0h-2.6zM419.29 385.0h2.6v3.0h-2.6zM426.41 389.0h2.6v8.0h-2.6zM429.99 375.0h2.6v14.0h-2.6zM433.58 349.0h2.6v26.0h-2.6zM444.41 374.7h2.6v1.6h-2.6zM448.05 360.0h2.6v15.0h-2.6zM451.58 358.7h2.6v1.6h-2.6zM455.05 354.0h2.6v5.0h-2.6zM462.17 343.0h2.6v23.0h-2.6zM472.94 355.0h2.6v15.0h-2.6zM480.11 338.0h2.6v23.0h-2.6zM490.88 353.0h2.6v4.0h-2.6zM498.17 340.0h2.6v13.0h-2.6zM505.41 339.0h2.6v9.0h-2.6zM508.94 332.0h2.6v7.0h-2.6zM516.17 321.0h2.6v12.0h-2.6zM519.82 308.0h2.6v13.0h-2.6zM526.99 300.0h2.6v25.0h-2.6zM530.64 295.0h2.6v5.0h-2.6zM534.23 291.0h2.6v4.0h-2.6zM541.41 275.0h2.6v17.0h-2.6zM544.99 258.0h2.6v17.0h-2.6zM559.46 249.0h2.6v21.0h-2.6zM566.52 248.0h2.6v5.0h-2.6zM570.11 244.0h2.6v4.0h-2.6zM573.70 238.0h2.6v6.0h-2.6zM588.11 254.0h2.6v3.0h-2.6zM591.58 234.0h2.6v20.0h-2.6zM602.23 297.0h2.6v3.0h-2.6zM605.82 294.0h2.6v3.0h-2.6zM609.41 292.7h2.6v1.6h-2.6zM630.88 320.0h2.6v3.0h-2.6zM634.52 318.7h2.6v1.6h-2.6zM656.29 340.0h2.6v3.0h-2.6zM659.94 330.0h2.6v10.0h-2.6zM663.58 323.0h2.6v7.0h-2.6zM670.70 308.0h2.6v15.0h-2.6zM684.99 326.0h2.6v15.0h-2.6zM688.64 298.0h2.6v28.0h-2.6zM692.23 263.0h2.6v35.0h-2.6zM699.35 259.0h2.6v13.0h-2.6zM702.82 257.7h2.6v1.6h-2.6zM706.41 204.0h2.6v54.0h-2.6zM717.23 218.0h2.6v25.0h-2.6zM720.88 200.0h2.6v18.0h-2.6zM732.17 216.0h2.6v12.0h-2.6zM739.76 211.0h2.6v12.0h-2.6zM747.35 207.0h2.6v12.0h-2.6zM751.05 180.0h2.6v27.0h-2.6zM762.41 193.0h2.6v10.0h-2.6zM766.23 184.0h2.6v9.0h-2.6zM770.05 165.0h2.6v19.0h-2.6zM781.46 192.0h2.6v8.0h-2.6zM788.82 192.0h2.6v8.0h-2.6zM796.11 203.0h2.6v5.0h-2.6zM799.70 197.0h2.6v6.0h-2.6zM817.82 183.0h2.6v27.0h-2.6zM821.41 157.0h2.6v26.0h-2.6zM832.17 178.0h2.6v5.0h-2.6zM835.76 169.0h2.6v9.0h-2.6zM849.99 182.0h2.6v6.0h-2.6zM864.23 214.0h2.6v15.0h-2.6zM871.35 216.0h2.6v3.0h-2.6zM882.05 238.0h2.6v5.0h-2.6zM889.29 228.0h2.6v11.0h-2.6zM892.88 225.0h2.6v3.0h-2.6zM896.41 212.0h2.6v13.0h-2.6zM903.64 225.0h2.6v11.0h-2.6zM914.41 220.0h2.6v23.0h-2.6zM928.76 239.7h2.6v1.6h-2.6zM932.41 229.0h2.6v11.0h-2.6zM953.99 256.0h2.6v7.0h-2.6zM957.64 254.7h2.6v1.6h-2.6zM968.46 266.7h2.6v1.6h-2.6zM972.11 257.0h2.6v10.0h-2.6zM975.64 255.7h2.6v1.6h-2.6zM979.23 254.7h2.6v1.6h-2.6zM990.11 254.0h2.6v11.0h-2.6zM997.35 249.0h2.6v5.0h-2.6zM1000.94 229.0h2.6v20.0h-2.6zM1004.46 226.0h2.6v3.0h-2.6zM1015.17 212.0h2.6v19.0h-2.6zM1033.17 223.0h2.6v8.0h-2.6zM1036.76 218.0h2.6v5.0h-2.6zM1043.94 228.0h2.6v11.0h-2.6zM1047.52 224.0h2.6v4.0h-2.6zM1061.82 242.0h2.6v6.0h-2.6zM1101.35 278.0h2.6v4.0h-2.6zM1104.94 276.0h2.6v2.0h-2.6zM1108.52 263.0h2.6v13.0h-2.6zM1112.11 261.7h2.6v1.6h-2.6zM1119.29 259.0h2.6v4.0h-2.6zM1122.88 245.0h2.6v14.0h-2.6zM1126.52 240.0h2.6v5.0h-2.6zM1148.11 259.7h2.6v1.6h-2.6zM1151.76 258.7h2.6v1.6h-2.6zM1166.17 263.0h2.6v6.0h-2.6zM1169.70 250.0h2.6v13.0h-2.6zM1173.23 248.0h2.6v2.0h-2.6zM1187.46 254.0h2.6v3.0h-2.6zM1219.70 329.0h2.6v5.0h-2.6zM1223.23 326.0h2.6v3.0h-2.6zM1226.76 303.0h2.6v23.0h-2.6zM1234.05 294.0h2.6v11.0h-2.6zM1241.35 249.0h2.6v49.0h-2.6zM1252.17 236.0h2.6v21.0h-2.6zM1255.76 216.0h2.6v20.0h-2.6zM1259.35 210.0h2.6v6.0h-2.6zM1270.05 211.0h2.6v7.0h-2.6zM1273.64 208.0h2.6v3.0h-2.6zM1277.23 191.0h2.6v17.0h-2.6zM1291.64 207.0h2.6v2.0h-2.6zM1295.29 201.0h2.6v6.0h-2.6zM1309.58 228.0h2.6v7.0h-2.6zM1316.82 239.0h2.6v7.0h-2.6zM1320.41 226.0h2.6v13.0h-2.6zM1327.64 210.0h2.6v18.0h-2.6zM1338.35 197.0h2.6v17.0h-2.6zM1349.05 194.0h2.6v9.0h-2.6zM1352.64 185.0h2.6v9.0h-2.6zM1356.23 164.0h2.6v21.0h-2.6zM1359.70 162.0h2.6v2.0h-2.6zM1366.88 140.0h2.6v28.0h-2.6zM1377.70 177.0h2.6v3.0h-2.6zM1381.35 174.0h2.6v3.0h-2.6zM1395.70 175.0h2.6v36.0h-2.6zM1399.29 168.0h2.6v7.0h-2.6zM1406.52 176.0h2.6v6.0h-2.6zM1410.17 166.0h2.6v10.0h-2.6zM1417.29 160.0h2.6v12.0h-2.6zM1420.94 155.0h2.6v5.0h-2.6zM1424.52 153.0h2.6v2.0h-2.6zM1428.11 143.0h2.6v10.0h-2.6zM1431.70 137.0h2.6v6.0h-2.6zM1453.20 162.0h2.6v3.0h-2.6zM1456.76 160.7h2.6v1.6h-2.6zM1471.02 174.0h2.6v3.0h-2.6zM1474.66 156.0h2.6v18.0h-2.6z" fill="#1f9c5c" stroke="#2d6a48" stroke-width="0.8"/><path d="M6.78 307.0h2.6v13.0h-2.6zM10.30 320.0h2.6v2.0h-2.6zM13.82 322.0h2.6v3.0h-2.6zM20.89 322.0h2.6v12.0h-2.6zM28.05 331.0h2.6v3.0h-2.6zM31.64 333.7h2.6v1.6h-2.6zM35.23 335.0h2.6v3.0h-2.6zM38.82 338.0h2.6v8.0h-2.6zM45.99 343.2h2.6v1.6h-2.6zM49.58 344.0h2.6v36.0h-2.6zM53.23 380.0h2.6v19.0h-2.6zM63.99 396.0h2.6v7.0h-2.6zM67.58 403.0h2.6v6.0h-2.6zM74.76 404.0h2.6v18.0h-2.6zM78.35 422.0h2.6v2.0h-2.6zM85.52 421.2h2.6v1.6h-2.6zM89.11 422.0h2.6v11.0h-2.6zM99.76 408.0h2.6v6.0h-2.6zM103.35 414.0h2.6v2.0h-2.6zM121.17 373.0h2.6v10.0h-2.6zM131.99 358.0h2.6v14.0h-2.6zM142.82 355.0h2.6v2.0h-2.6zM146.35 357.0h2.6v2.0h-2.6zM153.52 350.0h2.6v16.0h-2.6zM157.11 366.0h2.6v5.0h-2.6zM160.64 371.0h2.6v11.0h-2.6zM164.23 382.0h2.6v2.0h-2.6zM167.82 384.0h2.6v9.0h-2.6zM171.41 393.0h2.6v9.0h-2.6zM185.70 383.0h2.6v18.0h-2.6zM192.94 400.0h2.6v11.0h-2.6zM196.58 411.0h2.6v10.0h-2.6zM200.17 421.0h2.6v12.0h-2.6zM207.35 419.2h2.6v1.6h-2.6zM210.94 420.0h2.6v8.0h-2.6zM218.23 415.0h2.6v8.0h-2.6zM229.11 411.0h2.6v17.0h-2.6zM232.64 427.7h2.6v1.6h-2.6zM236.23 429.0h2.6v28.0h-2.6zM243.46 448.0h2.6v2.0h-2.6zM247.05 450.0h2.6v8.0h-2.6zM254.29 450.0h2.6v2.0h-2.6zM257.88 452.0h2.6v21.0h-2.6zM261.41 473.0h2.6v17.0h-2.6zM275.76 459.0h2.6v2.0h-2.6zM286.52 407.0h2.6v10.0h-2.6zM290.11 417.0h2.6v3.0h-2.6zM293.76 420.0h2.6v13.0h-2.6zM297.35 433.0h2.6v21.0h-2.6zM300.94 454.0h2.6v2.0h-2.6zM308.11 451.0h2.6v5.0h-2.6zM311.70 456.0h2.6v18.0h-2.6zM318.82 467.2h2.6v1.6h-2.6zM322.41 468.0h2.6v16.0h-2.6zM325.99 484.0h2.6v2.0h-2.6zM333.23 463.0h2.6v6.0h-2.6zM343.94 456.7h2.6v1.6h-2.6zM347.46 458.0h2.6v16.0h-2.6zM351.05 474.0h2.6v7.0h-2.6zM358.29 470.0h2.6v9.0h-2.6zM361.88 479.0h2.6v6.0h-2.6zM369.11 444.0h2.6v5.0h-2.6zM376.23 420.0h2.6v4.0h-2.6zM394.23 369.0h2.6v5.0h-2.6zM397.82 374.0h2.6v7.0h-2.6zM401.41 381.0h2.6v10.0h-2.6zM404.99 391.0h2.6v8.0h-2.6zM422.88 385.0h2.6v12.0h-2.6zM437.17 349.0h2.6v4.0h-2.6zM440.76 353.0h2.6v23.0h-2.6zM458.58 354.0h2.6v12.0h-2.6zM465.76 343.0h2.6v2.0h-2.6zM469.35 345.0h2.6v25.0h-2.6zM476.52 355.0h2.6v6.0h-2.6zM483.70 338.0h2.6v2.0h-2.6zM487.29 340.0h2.6v17.0h-2.6zM494.52 352.2h2.6v1.6h-2.6zM501.82 340.0h2.6v8.0h-2.6zM512.52 331.7h2.6v1.6h-2.6zM523.41 308.0h2.6v17.0h-2.6zM537.82 290.7h2.6v1.6h-2.6zM548.64 258.0h2.6v2.0h-2.6zM552.29 260.0h2.6v7.0h-2.6zM555.88 267.0h2.6v3.0h-2.6zM562.99 249.0h2.6v4.0h-2.6zM577.29 238.0h2.6v14.0h-2.6zM580.88 251.7h2.6v1.6h-2.6zM584.52 253.0h2.6v4.0h-2.6zM595.11 234.0h2.6v30.0h-2.6zM598.64 264.0h2.6v36.0h-2.6zM612.99 293.0h2.6v11.0h-2.6zM616.58 304.0h2.6v2.0h-2.6zM620.11 306.0h2.6v3.0h-2.6zM623.70 308.7h2.6v1.6h-2.6zM627.29 310.0h2.6v13.0h-2.6zM638.17 318.2h2.6v1.6h-2.6zM641.82 319.0h2.6v6.0h-2.6zM645.35 325.0h2.6v7.0h-2.6zM648.94 332.0h2.6v2.0h-2.6zM652.64 334.0h2.6v9.0h-2.6zM667.17 322.2h2.6v1.6h-2.6zM674.23 308.0h2.6v2.0h-2.6zM677.82 310.0h2.6v31.0h-2.6zM681.41 340.2h2.6v1.6h-2.6zM695.82 263.0h2.6v9.0h-2.6zM709.99 204.0h2.6v8.0h-2.6zM713.58 212.0h2.6v31.0h-2.6zM724.58 200.0h2.6v13.0h-2.6zM728.35 213.0h2.6v15.0h-2.6zM735.99 216.0h2.6v7.0h-2.6zM743.58 211.0h2.6v8.0h-2.6zM754.82 180.0h2.6v8.0h-2.6zM758.58 188.0h2.6v15.0h-2.6zM773.88 165.0h2.6v28.0h-2.6zM777.70 193.0h2.6v7.0h-2.6zM785.17 192.0h2.6v8.0h-2.6zM792.46 192.0h2.6v16.0h-2.6zM803.35 197.0h2.6v6.0h-2.6zM806.94 203.0h2.6v2.0h-2.6zM810.52 205.0h2.6v2.0h-2.6zM814.17 207.0h2.6v3.0h-2.6zM824.99 156.2h2.6v1.6h-2.6zM828.58 157.0h2.6v26.0h-2.6zM839.29 169.0h2.6v4.0h-2.6zM842.82 173.0h2.6v12.0h-2.6zM846.41 185.0h2.6v3.0h-2.6zM853.58 182.0h2.6v23.0h-2.6zM857.11 205.0h2.6v5.0h-2.6zM860.70 210.0h2.6v19.0h-2.6zM867.76 214.0h2.6v5.0h-2.6zM874.94 216.0h2.6v13.0h-2.6zM878.46 229.0h2.6v14.0h-2.6zM885.64 237.7h2.6v1.6h-2.6zM899.99 212.0h2.6v24.0h-2.6zM907.23 224.2h2.6v1.6h-2.6zM910.82 225.0h2.6v18.0h-2.6zM917.99 220.0h2.6v6.0h-2.6zM921.52 226.0h2.6v4.0h-2.6zM925.11 230.0h2.6v11.0h-2.6zM935.99 228.2h2.6v1.6h-2.6zM939.64 229.0h2.6v5.0h-2.6zM943.29 234.0h2.6v11.0h-2.6zM946.88 245.0h2.6v4.0h-2.6zM950.41 249.0h2.6v14.0h-2.6zM961.23 255.0h2.6v8.0h-2.6zM964.82 263.0h2.6v5.0h-2.6zM982.88 255.0h2.6v6.0h-2.6zM986.52 261.0h2.6v4.0h-2.6zM993.70 253.2h2.6v1.6h-2.6zM1007.99 226.0h2.6v4.0h-2.6zM1011.58 229.7h2.6v1.6h-2.6zM1018.76 212.0h2.6v2.0h-2.6zM1022.41 214.0h2.6v5.0h-2.6zM1026.05 219.0h2.6v8.0h-2.6zM1029.64 227.0h2.6v4.0h-2.6zM1040.35 218.0h2.6v21.0h-2.6zM1051.11 224.0h2.6v15.0h-2.6zM1054.70 239.0h2.6v9.0h-2.6zM1058.23 247.2h2.6v1.6h-2.6zM1065.41 242.0h2.6v3.0h-2.6zM1069.05 245.0h2.6v9.0h-2.6zM1072.70 254.0h2.6v8.0h-2.6zM1076.29 261.2h2.6v1.6h-2.6zM1079.88 261.7h2.6v1.6h-2.6zM1083.41 263.0h2.6v5.0h-2.6zM1086.94 268.0h2.6v5.0h-2.6zM1090.46 273.0h2.6v7.0h-2.6zM1094.05 280.0h2.6v2.0h-2.6zM1097.70 281.2h2.6v1.6h-2.6zM1115.70 261.7h2.6v1.6h-2.6zM1130.17 240.0h2.6v2.0h-2.6zM1133.76 241.2h2.6v1.6h-2.6zM1137.41 242.0h2.6v3.0h-2.6zM1140.94 245.0h2.6v9.0h-2.6zM1144.52 254.0h2.6v7.0h-2.6zM1155.35 258.2h2.6v1.6h-2.6zM1158.94 259.0h2.6v4.0h-2.6zM1162.52 263.0h2.6v6.0h-2.6zM1176.76 247.2h2.6v1.6h-2.6zM1180.35 247.7h2.6v1.6h-2.6zM1183.94 249.0h2.6v8.0h-2.6zM1190.99 254.0h2.6v8.0h-2.6zM1194.52 262.0h2.6v11.0h-2.6zM1198.05 273.0h2.6v20.0h-2.6zM1201.70 293.0h2.6v9.0h-2.6zM1205.35 302.0h2.6v13.0h-2.6zM1208.94 315.0h2.6v16.0h-2.6zM1212.52 331.0h2.6v2.0h-2.6zM1216.11 332.7h2.6v1.6h-2.6zM1230.41 303.0h2.6v2.0h-2.6zM1237.70 294.0h2.6v4.0h-2.6zM1244.94 249.0h2.6v8.0h-2.6zM1248.58 256.2h2.6v1.6h-2.6zM1262.94 210.0h2.6v2.0h-2.6zM1266.46 212.0h2.6v6.0h-2.6zM1280.82 191.0h2.6v9.0h-2.6zM1284.46 200.0h2.6v9.0h-2.6zM1288.05 208.2h2.6v1.6h-2.6zM1298.94 201.0h2.6v12.0h-2.6zM1302.52 213.0h2.6v8.0h-2.6zM1306.05 221.0h2.6v14.0h-2.6zM1313.17 228.0h2.6v18.0h-2.6zM1323.99 226.0h2.6v2.0h-2.6zM1331.23 210.0h2.6v2.0h-2.6zM1334.76 212.0h2.6v2.0h-2.6zM1341.94 197.0h2.6v6.0h-2.6zM1345.46 202.2h2.6v1.6h-2.6zM1363.23 162.0h2.6v6.0h-2.6zM1370.52 140.0h2.6v32.0h-2.6zM1374.11 172.0h2.6v8.0h-2.6zM1384.94 174.0h2.6v19.0h-2.6zM1388.46 193.0h2.6v17.0h-2.6zM1392.05 209.7h2.6v1.6h-2.6zM1402.88 168.0h2.6v14.0h-2.6zM1413.76 166.0h2.6v6.0h-2.6zM1435.29 137.0h2.6v6.0h-2.6zM1438.88 143.0h2.6v2.0h-2.6zM1442.41 144.7h2.6v1.6h-2.6zM1445.99 146.0h2.6v4.0h-2.6zM1449.61 150.0h2.6v15.0h-2.6zM1460.33 161.0h2.6v12.0h-2.6zM1463.86 172.2h2.6v1.6h-2.6zM1467.40 173.0h2.6v4.0h-2.6z" fill="#e05a4e" stroke="#8a3a30" stroke-width="0.8"/>
<path d="M596.5 225.8L661 300.7M826 131.5L1217.3 248M1372 94L1640.6 220.4" stroke="#f23a3a" stroke-width="1.3" fill="none"/>
<!-- rsi pane -->
<rect x="0" y="564.5" width="1757" height="145.5" fill="#f0e4f2"/>
<path d="M0 564.2H1757M0 709.8H1757" stroke="#a59fa5" stroke-width="1.7" stroke-dasharray="5.8,5.23" stroke-dashoffset="0.9"/>
<polyline points="0.0,652.8 4.5,632.7 8.5,646.8 10.7,648.4 14.5,653.5 18.3,648.4 21.9,660.7 25.7,657.3 30.2,661.8 36.9,666.3 39.8,675.9 43.6,670.7 47.0,672.5 51.5,712.0 54.8,726.0 62.2,720.0 68.2,730.0 72.0,713.2 76.0,730.0 79.4,731.0 87.2,724.4 91.0,732.7 94.0,692.0 97.3,681.3 101.0,688.0 104.5,689.3 111.9,636.0 116.3,625.0 119.7,617.0 122.4,633.4 126.4,626.0 129.3,598.5 133.6,622.2 137.0,607.4 141.0,601.6 148.0,609.2 151.0,595.8 154.4,626.7 158.4,632.0 162.2,649.0 166.0,653.5 173.4,677.4 175.6,660.2 179.6,654.0 183.4,644.6 186.8,668.5 190.6,667.4 195.0,682.0 202.2,706.6 204.4,682.0 208.4,682.0 212.2,691.0 215.8,665.9 219.6,675.7 227.0,652.5 230.8,675.3 233.5,680.9 237.0,705.5 240.9,690.5 244.7,688.7 248.7,698.3 252.0,683.8 255.9,686.5 262.1,721.0 266.1,708.8 270.0,669.7 277.3,668.1 281.1,625.0 284.5,602.6 287.2,613.8 291.2,620.5 294.6,636.0 298.4,659.2 302.0,661.9 305.7,653.4 309.5,659.6 313.6,679.8 315.8,669.7 319.8,666.8 323.6,685.3 327.4,686.9 330.8,651.8 334.8,659.6 338.2,655.1 342.2,640.6 344.4,643.5 348.7,665.2 352.3,671.9 356.0,654.0 359.9,665.2 363.2,670.8 367.3,618.2 369.5,622.7 374.0,593.6 377.3,600.3 381.1,572.4 384.7,564.5 388.5,563.9 391.9,560.0 395.6,565.7 399.0,583.6 405.7,609.4 409.7,606.7 413.5,600.0 417.3,594.1 420.9,594.4 424.7,615.0 428.0,601.5 431.4,587.0 434.7,565.7 438.1,573.1 441.9,608.2 445.9,606.7 449.3,594.4 456.0,587.0 459.4,607.1 463.2,584.7 467.2,588.1 471.0,623.9 475.0,611.1 478.4,615.6 481.0,593.2 484.4,597.0 488.4,619.4 492.9,615.6 496.3,615.6 499.6,601.5 503.6,612.7 509.7,595.5 513.0,597.0 517.5,582.5 520.9,573.1 524.7,603.8 528.7,578.0 535.4,570.6 538.3,571.8 545.9,545.6 550.0,549.0 553.3,562.4 557.3,570.2 561.1,552.3 564.0,560.6 571.7,553.4 575.0,549.4 578.6,575.8 582.4,579.1 585.7,585.9 589.5,581.4 592.4,562.4 599.5,660.8 602.9,659.7 607.4,651.9 611.4,650.7 614.6,662.6 617.4,659.7 620.8,669.3 624.8,668.6 628.6,684.3 632.0,682.7 636.0,676.9 639.8,676.9 644.3,686.5 646.5,693.9 650.3,695.5 653.2,708.2 657.7,694.4 661.0,679.8 665.1,659.7 668.2,660.4 672.2,630.6 674.9,641.8 679.0,680.5 682.3,680.5 689.0,619.4 693.5,579.1 697.3,591.5 700.2,581.4 703.6,580.3 707.4,546.7 711.0,556.8 714.8,595.9 722.1,569.1 728.2,601.5 732.2,593.7 736.0,600.0 739.4,592.6 743.4,602.6 750.5,575.3 755.0,575.3 760.6,603.8 768.4,589.2 772.5,574.7 776.3,608.2 780.1,616.1 782.7,609.2 786.3,619.3 790.0,611.9 793.9,630.5 801.3,619.3 805.0,626.0 808.6,627.6 811.8,626.7 815.1,634.3 822.0,581.7 826.5,581.7 830.3,618.2 833.7,614.1 837.7,604.3 840.4,610.3 844.2,624.4 848.2,628.2 851.6,621.5 855.0,650.6 858.3,656.6 862.8,676.3 865.0,655.7 869.0,661.8 872.4,655.7 880.2,683.0 884.0,675.9 887.4,678.1 891.4,659.6 894.1,655.1 897.4,637.2 901.3,666.3 904.8,651.3 908.6,649.5 912.4,669.6 916.0,641.0 922.1,650.6 926.5,661.8 929.9,662.9 933.9,645.5 937.7,645.5 941.1,654.0 945.1,668.5 947.3,673.0 951.1,688.6 954.5,677.4 959.0,675.2 963.4,685.7 966.8,689.3 970.2,688.0 974.2,669.6 979.9,660.2 987.8,678.1 991.1,654.0 995.1,651.7 998.5,641.0 1002.3,605.9 1005.2,602.1 1009.0,610.3 1013.0,611.9 1016.4,582.8 1020.2,586.8 1023.8,599.1 1028.2,615.9 1031.6,626.7 1034.3,611.9 1037.6,603.0 1041.4,646.8 1045.0,626.0 1048.8,619.3 1053.3,646.1 1057.3,660.2 1058.9,660.2 1062.7,647.2 1066.7,655.7 1073.4,678.6 1077.5,683.0 1081.3,681.5 1085.1,687.5 1088.6,696.5 1092.4,705.9 1095.8,708.8 1099.2,708.1 1102.5,695.3 1106.5,686.4 1110.3,649.5 1113.7,645.7 1116.4,648.4 1120.4,638.3 1124.4,607.4 1128.2,600.7 1132.7,605.9 1136.1,607.7 1139.4,609.7 1141.7,638.3 1145.5,655.7 1149.0,650.0 1152.9,651.3 1156.7,643.9 1160.7,661.8 1164.0,673.6 1167.8,661.8 1170.7,632.7 1174.1,616.0 1178.2,620.6 1181.5,623.3 1185.6,645.2 1189.1,632.9 1193.2,652.0 1197.3,682.0 1199.5,709.4 1202.8,717.6 1210.4,743.6 1215.9,746.3 1220.5,748.2 1224.6,709.4 1227.9,666.2 1231.5,667.0 1235.6,646.0 1238.9,652.0 1243.2,585.1 1246.5,600.1 1250.6,597.4 1253.3,580.4 1256.9,563.2 1260.2,559.7 1264.3,570.0 1267.8,573.3 1271.6,567.3 1276.0,564.0 1279.3,551.5 1285.3,585.1 1288.9,586.4 1293.0,583.2 1296.2,578.3 1300.6,598.7 1303.9,611.6 1306.6,638.4 1309.9,628.8 1314.3,653.4 1318.9,637.8 1321.6,623.3 1325.2,627.4 1329.8,605.6 1335.3,610.5 1339.4,590.0 1343.5,602.8 1347.6,599.6 1350.0,592.0 1354.0,580.7 1358.0,559.9 1361.9,557.9 1364.3,571.8 1367.9,547.6 1371.5,601.6 1375.4,614.5 1379.4,608.5 1382.8,606.6 1389.3,653.3 1393.1,655.2 1396.7,613.5 1400.3,607.2 1404.0,622.5 1411.6,607.2 1415.2,618.5 1418.5,604.6 1422.0,599.2 1425.1,598.0 1433.0,581.7 1437.0,595.2 1441.0,600.6 1444.4,599.2 1447.4,607.6 1450.3,630.4 1454.3,626.4 1457.9,624.4 1461.9,647.3 1465.2,644.3 1469.2,653.3 1471.6,643.3 1475.6,615.1" fill="none" stroke="#b36bc2" stroke-width="1.2"/>
<path d="M560.5 544L653.2 708.9M707.6 542.2L1220.5 748.2M1279.3 549.6L1640 744" stroke="#f23a3a" stroke-width="1.3" fill="none"/>
<!-- separators / axes -->
<path d="M0 520.5H1813" stroke="#555" stroke-width="1.2"/>
<path d="M1758.5 42V762" stroke="#777" stroke-width="1.5"/>
<path d="M0 761.5H1758" stroke="#777" stroke-width="1.5"/>
<path d="M1759 118.0h4" stroke="#777" stroke-width="1"/><text x="1767.5" y="123.2" font-size="14.5" fill="#666" text-anchor="start" font-weight="normal" >2100.00</text><path d="M1759 195.8h4" stroke="#777" stroke-width="1"/><text x="1767.5" y="201.0" font-size="14.5" fill="#666" text-anchor="start" font-weight="normal" >2000.00</text><path d="M1759 234.7h4" stroke="#777" stroke-width="1"/><text x="1767.5" y="239.89999999999998" font-size="14.5" fill="#666" text-anchor="start" font-weight="normal" >1950.00</text><path d="M1759 273.6h4" stroke="#777" stroke-width="1"/><text x="1767.5" y="278.8" font-size="14.5" fill="#666" text-anchor="start" font-weight="normal" >1900.00</text><path d="M1759 312.5h4" stroke="#777" stroke-width="1"/><text x="1767.5" y="317.7" font-size="14.5" fill="#666" text-anchor="start" font-weight="normal" >1850.00</text><path d="M1759 351.4h4" stroke="#777" stroke-width="1"/><text x="1767.5" y="356.59999999999997" font-size="14.5" fill="#666" text-anchor="start" font-weight="normal" >1800.00</text><path d="M1759 390.3h4" stroke="#777" stroke-width="1"/><text x="1767.5" y="395.5" font-size="14.5" fill="#666" text-anchor="start" font-weight="normal" >1750.00</text><path d="M1759 429.2h4" stroke="#777" stroke-width="1"/><text x="1767.5" y="434.4" font-size="14.5" fill="#666" text-anchor="start" font-weight="normal" >1700.00</text><path d="M1759 468.1h4" stroke="#777" stroke-width="1"/><text x="1767.5" y="473.3" font-size="14.5" fill="#666" text-anchor="start" font-weight="normal" >1650.00</text><path d="M1759 507.0h4" stroke="#777" stroke-width="1"/><text x="1767.5" y="512.2" font-size="14.5" fill="#666" text-anchor="start" font-weight="normal" >1600.00</text>
<path d="M1759 527.5h4" stroke="#777" stroke-width="1"/><text x="1767.5" y="532.7" font-size="14.5" fill="#666" text-anchor="start" font-weight="normal" >80.0000</text><path d="M1759 563.9h4" stroke="#777" stroke-width="1"/><text x="1767.5" y="569.13" font-size="14.5" fill="#666" text-anchor="start" font-weight="normal" >70.0000</text><path d="M1759 600.4h4" stroke="#777" stroke-width="1"/><text x="1767.5" y="605.5600000000001" font-size="14.5" fill="#666" text-anchor="start" font-weight="normal" >60.0000</text><path d="M1759 636.8h4" stroke="#777" stroke-width="1"/><text x="1767.5" y="641.99" font-size="14.5" fill="#666" text-anchor="start" font-weight="normal" >50.0000</text><path d="M1759 673.2h4" stroke="#777" stroke-width="1"/><text x="1767.5" y="678.4200000000001" font-size="14.5" fill="#666" text-anchor="start" font-weight="normal" >40.0000</text><path d="M1759 709.6h4" stroke="#777" stroke-width="1"/><text x="1767.5" y="714.85" font-size="14.5" fill="#666" text-anchor="start" font-weight="normal" >30.0000</text><path d="M1759 746.1h4" stroke="#777" stroke-width="1"/><text x="1767.5" y="751.28" font-size="14.5" fill="#666" text-anchor="start" font-weight="normal" >20.0000</text>
<!-- current price labels -->
<rect x="1759" y="67" width="54" height="19.5" fill="#555"/>
<path d="M1759 76.5h4" stroke="#ccc"/>
<text x="1767.5" y="82.2" font-size="14.5" fill="#fff" text-anchor="start" font-weight="normal" >2153.44</text>
<rect x="1759" y="147.2" width="54" height="19.4" fill="#4a6fe0"/>
<text x="1767.5" y="162.2" font-size="14.5" fill="#fff" text-anchor="start" font-weight="normal" >2051.30</text>
<rect x="1759" y="607" width="54" height="19.5" fill="#85068a"/>
<text x="1767.5" y="622.2" font-size="14.5" fill="#fff" text-anchor="start" font-weight="normal" >55.9111</text>
<rect x="0" y="0" width="1813" height="41.5" fill="#f0f1f5"/><path d="M0 41.5H1813" stroke="#d3d6db" stroke-width="1"/><rect x="-1" y="-1" width="415.5" height="34.5" fill="#fff" stroke="#d3d7dc" stroke-width="1"/><rect x="226.5" y="0" width="48" height="33" fill="#f0f1f5"/><path d="M122.5 0V33" stroke="#d3d7dc" stroke-width="1"/><path d="M161.5 0V33" stroke="#d3d7dc" stroke-width="1"/><path d="M226.5 0V33" stroke="#d3d7dc" stroke-width="1"/><path d="M274.5 0V33" stroke="#d3d7dc" stroke-width="1"/><path d="M323.5 0V33" stroke="#d3d7dc" stroke-width="1"/><path d="M388.5 0V33" stroke="#d3d7dc" stroke-width="1"/><path d="M11.7 39.7L14.8 36.3L17.9 39.7Z" fill="#c8cbd0"/><path d="M31.5 35V41" stroke="#d3d7dc" stroke-width="1"/><text x="8" y="20.6" font-size="14" fill="#333" font-weight="bold" text-anchor="start" textLength="67" lengthAdjust="spacingAndGlyphs" >XAU/USD</text><text x="141.5" y="20.6" font-size="14" fill="#333" font-weight="bold" text-anchor="middle" >5</text><text x="177.5" y="20.6" font-size="14" fill="#333" font-weight="bold" text-anchor="start" textLength="32" lengthAdjust="spacingAndGlyphs" >1Std.</text><text x="241.5" y="20.6" font-size="14" fill="#3aaee0" font-weight="bold" text-anchor="start" textLength="18" lengthAdjust="spacingAndGlyphs" >1T</text><text x="290" y="20.6" font-size="14" fill="#333" font-weight="bold" text-anchor="start" textLength="18" lengthAdjust="spacingAndGlyphs" >1M</text><text x="339.5" y="20.6" font-size="14" fill="#333" font-weight="bold" text-anchor="start" textLength="33" lengthAdjust="spacingAndGlyphs" >2Std.</text><path d="M394.5 13.2H404.5L399.5 17.8Z" fill="#444"/><rect x="420.5" y="-1" width="53" height="34.5" fill="#f0f1f5" stroke="#d3d7dc" stroke-width="1"/><rect x="474.0" y="-1" width="53.5" height="34.5" fill="#fff" stroke="#d3d7dc" stroke-width="1"/><rect x="528.0" y="-1" width="53.5" height="34.5" fill="#fff" stroke="#d3d7dc" stroke-width="1"/><rect x="582.0" y="-1" width="25.5" height="34.5" fill="#fff" stroke="#d3d7dc" stroke-width="1"/><g stroke="#3aaee0" fill="none" stroke-width="1.4"><rect x="440.2" y="11.8" width="5.4" height="12.6"/><path d="M442.9 5.3V11.8M442.9 24.4V28.3M451.9 4V28.5"/></g><rect x="448.9" y="7.9" width="6" height="14" fill="#3aaee0"/><path d="M490.3 19.9L495.2 15.6L498.5 20.9L504.5 13.6L508.5 13.9L512 9.9V24.2H490.3Z" fill="#d8d8d8"/><path d="M490.3 19.9L495.2 15.6L498.5 20.9L504.5 13.6L508.5 13.9L512 9.9" stroke="#777" stroke-width="1.9" fill="none"/><path d="M547.9 7.9V27.2M548 11.1H552.8M543.2 23.5H548M559.1 5.3V24.8M554.3 14.9H559M559 21.2H564.1" stroke="#777" stroke-width="2" fill="none"/><path d="M588.3 13.2H597.5L592.9 17.6Z" fill="#444"/><rect x="613.5" y="-1" width="47" height="34.5" fill="#fff" stroke="#d3d7dc" stroke-width="1"/><path d="M644.14 14.14L646.63 14.62L646.63 18.38L644.14 18.86L643.58 20.23L644.99 22.33L642.33 24.99L640.23 23.58L638.86 24.14L638.38 26.63L634.62 26.63L634.14 24.14L632.77 23.58L630.67 24.99L628.01 22.33L629.42 20.23L628.86 18.86L626.37 18.38L626.37 14.62L628.86 14.14L629.42 12.77L628.01 10.67L630.67 8.01L632.77 9.42L634.14 8.86L634.62 6.37L638.38 6.37L638.86 8.86L640.23 9.42L642.33 8.01L644.99 10.67L643.58 12.77ZM640.9 16.5A4.4 4.4 0 1 0 632.1 16.5A4.4 4.4 0 1 0 640.9 16.5Z" fill="#777" fill-rule="evenodd"/><rect x="666.8" y="-1" width="52.700000000000045" height="34.5" fill="#fff" stroke="#d3d7dc" stroke-width="1"/><path d="M684.5 25.6V21.1M688 25.6V18.2M691.7 25.6V21.1M695.6 25.6V16.1M699.2 25.6V19.9M703.1 25.6V13.2" stroke="#777" stroke-width="2.2" fill="none"/><path d="M683.7 15.7L687.8 12.8L691.3 15.9L695.3 10.3L699 14.7L703.1 7.6" stroke="#777" stroke-width="1.4" fill="none"/><g fill="#777"><circle cx="683.7" cy="15.7" r="1.1"/><circle cx="687.8" cy="12.8" r="1.1"/><circle cx="691.3" cy="15.9" r="1.1"/><circle cx="695.3" cy="10.3" r="1.1"/><circle cx="699" cy="14.7" r="1.1"/><circle cx="703.1" cy="7.6" r="1.1"/></g><rect x="725.0" y="-1" width="52.5" height="34.5" fill="#fff" stroke="#d3d7dc" stroke-width="1"/><path d="M742 9.9H761" stroke="#777" stroke-width="1.7"/><path d="M750 9L751.5 7.6L753 9Z" fill="#777" stroke="#777" stroke-width="1"/><path d="M745.3 10.5L741.9 20.5M745.3 10.5L748.7 20.5M757.6 10.5L754.2 20.5M757.6 10.5L761 20.5" stroke="#777" stroke-width="1.1" fill="none"/><path d="M741.4 20.3H749.2A3.9 3.9 0 0 1 741.4 20.3Z M753.7 20.3H761.5A3.9 3.9 0 0 1 753.7 20.3Z" fill="#777"/><rect x="783.8" y="-1" width="32.700000000000045" height="34.5" fill="#fff" stroke="#d3d7dc" stroke-width="1"/><rect x="816.9" y="-1" width="32.60000000000002" height="34.5" fill="#f0f1f5" stroke="#d3d7dc" stroke-width="1"/><path d="M791.9 15.6L800.2 10.3V13.9C805 13.9 808.5 17 808.8 22.2C807 19 804 17.5 800.2 17.5V21.2Z" fill="#777"/><path d="M841.9 15.6L833.6 10.3V13.9C828.8 13.9 825.3 17 824.4 22.5C826.6 19 829.8 17.5 833.6 17.5V21.2Z" fill="#a2a2a2"/><rect x="857.3" y="-1" width="40.200000000000045" height="34.5" fill="#fff" stroke="#d3d7dc" stroke-width="1"/><path d="M875 6.3C871.5 6.3 869.3 10 869.2 14L868.8 20H866.1V22.8H881V20H881.2L880.8 14C880.7 10 878.5 6.3 875 6.3Z" fill="#777"/><path d="M872.4 24.2H877.4A2.5 2.2 0 0 1 872.4 24.2Z" fill="#777"/><path d="M883.6 15.9V27.2M878.3 21.5H889.6" stroke="#fff" stroke-width="4"/><path d="M883.6 16.9V26.2M879.3 21.5H888.6" stroke="#777" stroke-width="2"/><rect x="1526.5" y="-1" width="56" height="34.5" fill="#fff" stroke="#d3d7dc" stroke-width="1"/><path d="M1544.3 9.6H1549.2L1550.5 6.3H1558.8L1560.1 9.6H1564.8A2 2 0 0 1 1566.8 11.6V23.5A2 2 0 0 1 1564.8 25.5H1544.3A2 2 0 0 1 1542.3 23.5V11.6A2 2 0 0 1 1544.3 9.6Z" fill="#777"/><circle cx="1554.5" cy="17.5" r="4.6" fill="none" stroke="#fff" stroke-width="2.4"/><rect x="1587.8" y="-1" width="57.700000000000045" height="34.5" fill="#fff" stroke="#d3d7dc" stroke-width="1"/><rect x="1595.9" y="5.5" width="20.6" height="19.9" fill="#e4e4e4" stroke="#777" stroke-width="1.3"/><path d="M1628.3 13.2H1637.6L1633 17.6Z" fill="#444"/><rect x="1651.5" y="-1" width="63" height="34.5" fill="#fff" stroke="#d3d7dc" stroke-width="1"/><rect x="1714.8" y="-1" width="63.700000000000045" height="34.5" fill="#fff" stroke="#d3d7dc" stroke-width="1"/><path d="M1677 25.6H1672.3A5 5 0 1 1 1674.5 16.1A7.8 7.8 0 1 1 1689.5 17.5A5.3 5.3 0 1 1 1694 25.6H1689" fill="none" stroke="#888" stroke-width="1.2"/><path d="M1679.9 15.5H1686.5V21.6H1690L1683.2 27.4L1676.5 21.6H1679.9Z" fill="#fff" stroke="#888" stroke-width="1.2"/><path d="M1740 25.6H1735.3A5 5 0 1 1 1737.5 16.1A7.8 7.8 0 1 1 1752.5 17.5A5.3 5.3 0 1 1 1757 25.6H1752" fill="none" stroke="#888" stroke-width="1.2"/><path d="M1746.2 13.9L1753.2 20.7H1749.8V26.5H1743V20.7H1739.5Z" fill="#888"/><rect x="1784.9" y="-1" width="44.59999999999991" height="34.5" fill="#fff" stroke="#d3d7dc" stroke-width="1"/><path d="M1792 5.4H1797.5L1795.5 7.4L1799.7 11.6L1797.8 13.5L1793.6 9.3L1792 11Z M1792 26.5H1797.5L1795.5 24.5L1799.7 20.3L1797.8 18.4L1793.6 22.6L1792 21Z M1813 5.4H1807.5L1809.5 7.4L1805.3 11.6L1807.2 13.5L1811.4 9.3L1813 11Z M1813 26.5H1807.5L1809.5 24.5L1805.3 20.3L1807.2 18.4L1811.4 22.6L1813 21Z" fill="#777"/>
<rect x="6.7" y="57.5" width="14.4" height="14.8" rx="1.5" fill="#fff" stroke="#666" stroke-width="1.1"/><path d="M8.8 65.1H19.4" stroke="#777" stroke-width="1.2"/><text x="30" y="73.6" font-size="20" fill="#555" font-weight="normal" text-anchor="start" textLength="232" lengthAdjust="spacingAndGlyphs" >XAU/USD, T, Echtzeit-FX</text><path d="M267 65H276L271.5 69.5Z" fill="#ccc"/><rect x="289" y="59" width="17" height="17" fill="#dcdcdc"/><rect x="310" y="59" width="17" height="17" fill="#dcdcdc"/><path d="M291 67.6Q297.7 57.5 304.4 67.6Q297.7 77.7 291 67.6Z" fill="#fff"/><circle cx="297.7" cy="67.6" r="2.9" fill="none" stroke="#d8d8d8" stroke-width="1.4"/><path d="M323.18 66.05L324.69 66.35L324.69 68.65L323.18 68.95L322.83 69.79L323.69 71.06L322.06 72.69L320.79 71.83L319.95 72.18L319.65 73.69L317.35 73.69L317.05 72.18L316.21 71.83L314.94 72.69L313.31 71.06L314.17 69.79L313.82 68.95L312.31 68.65L312.31 66.35L313.82 66.05L314.17 65.21L313.31 63.94L314.94 62.31L316.21 63.17L317.05 62.82L317.35 61.31L319.65 61.31L319.95 62.82L320.79 63.17L322.06 62.31L323.69 63.94L322.83 65.21ZM320.6 67.5A2.1 2.1 0 1 0 316.4 67.5A2.1 2.1 0 1 0 320.6 67.5Z" fill="#fff" fill-rule="evenodd"/><text x="339" y="73.8" font-size="17.5" fill="#555" font-weight="normal" text-anchor="start" textLength="119" lengthAdjust="spacingAndGlyphs" >Eröffnungskurs</text><text x="462" y="73.8" font-size="17.5" fill="#1e5a2e" font-weight="normal" text-anchor="start" textLength="62" lengthAdjust="spacingAndGlyphs" >2035.21</text><text x="538.5" y="73.8" font-size="17.5" fill="#555" font-weight="normal" text-anchor="start" textLength="89.0" lengthAdjust="spacingAndGlyphs" >Höchstkurs</text><text x="630.5" y="73.8" font-size="17.5" fill="#1e5a2e" font-weight="normal" text-anchor="start" textLength="63.5" lengthAdjust="spacingAndGlyphs" >2062.28</text><text x="707.7" y="73.8" font-size="17.5" fill="#555" font-weight="normal" text-anchor="start" textLength="127.0" lengthAdjust="spacingAndGlyphs" >niedrigster Kurs</text><text x="838.7" y="73.8" font-size="17.5" fill="#1e5a2e" font-weight="normal" text-anchor="start" textLength="63.3" lengthAdjust="spacingAndGlyphs" >2030.15</text><text x="915.7" y="73.8" font-size="17.5" fill="#555" font-weight="normal" text-anchor="start" textLength="91.0" lengthAdjust="spacingAndGlyphs" >Schlusskurs</text><text x="1010" y="73.8" font-size="17.5" fill="#1e5a2e" font-weight="normal" text-anchor="start" textLength="64" lengthAdjust="spacingAndGlyphs" >2051.30</text><text x="15.5" y="500.3" font-size="25.5" fill="#111" font-weight="bold" text-anchor="start" textLength="112" lengthAdjust="spacingAndGlyphs" stroke="#111" stroke-width="0.7">Investıng</text><text x="129.5" y="500.3" font-size="15" fill="#444" font-weight="normal" text-anchor="start" textLength="36" lengthAdjust="spacingAndGlyphs" >.com</text><ellipse cx="93.8" cy="480" rx="1.8" ry="2.6" fill="#f5a300" transform="rotate(35 93.8 480)"/><rect x="1712.2" y="76.1" width="16.6" height="16.7" fill="#d8d8d8"/><rect x="1733.1" y="76.1" width="17.1" height="16.7" fill="#d8d8d8"/><path d="M1720.5 79.5V88M1717.5 85.5L1720.5 89L1723.5 85.5Z" stroke="#fff" stroke-width="1.6" fill="#fff"/><path d="M1741.6 80V89M1738.8 82.5L1741.6 79L1744.4 82.5ZM1738.8 86.5L1741.6 90L1744.4 86.5Z" stroke="#fff" stroke-width="1.6" fill="#fff"/><text x="6.7" y="544.7" font-size="14.5" fill="#555" font-weight="normal" text-anchor="start" textLength="51.6" lengthAdjust="spacingAndGlyphs" >RSI  (14)</text><path d="M64.9 537H73.4L69.1 541.4Z" fill="#ccc"/><rect x="86.2" y="532.3" width="17.2" height="17" fill="#dcdcdc"/><rect x="107" y="532.3" width="17.2" height="17" fill="#dcdcdc"/><rect x="129" y="532.3" width="17.2" height="17" fill="#dcdcdc"/><path d="M88.2 540.8Q94.7 531.2 101.2 540.8Q94.7 550.4 88.2 540.8Z" fill="#fff"/><circle cx="94.7" cy="540.8" r="2.8" fill="none" stroke="#d8d8d8" stroke-width="1.4"/><path d="M120.28 539.35L121.79 539.65L121.79 541.95L120.28 542.25L119.93 543.09L120.79 544.36L119.16 545.99L117.89 545.13L117.05 545.48L116.75 546.99L114.45 546.99L114.15 545.48L113.31 545.13L112.04 545.99L110.41 544.36L111.27 543.09L110.92 542.25L109.41 541.95L109.41 539.65L110.92 539.35L111.27 538.51L110.41 537.24L112.04 535.61L113.31 536.47L114.15 536.12L114.45 534.61L116.75 534.61L117.05 536.12L117.89 536.47L119.16 535.61L120.79 537.24L119.93 538.51ZM117.69999999999999 540.8A2.1 2.1 0 1 0 113.5 540.8A2.1 2.1 0 1 0 117.69999999999999 540.8Z" fill="#fff" fill-rule="evenodd"/><path d="M132 535.5L143 545.6M143 535.5L132 545.6" stroke="#fff" stroke-width="1.8"/><text x="156.6" y="546.8" font-size="16" fill="#85068a" font-weight="normal" text-anchor="start" textLength="52" lengthAdjust="spacingAndGlyphs" >55.9111</text>
<path d="M44.7 762V766" stroke="#777" stroke-width="1"/><rect x="44.2" y="778" width="1" height="1" fill="#aaa"/><path d="M203.3 762V766" stroke="#777" stroke-width="1"/><rect x="202.8" y="778" width="1" height="1" fill="#aaa"/><path d="M357.3 762V766" stroke="#777" stroke-width="1"/><rect x="356.8" y="778" width="1" height="1" fill="#aaa"/><path d="M515 762V766" stroke="#777" stroke-width="1"/><rect x="514.5" y="778" width="1" height="1" fill="#aaa"/><path d="M666 762V766" stroke="#777" stroke-width="1"/><rect x="665.5" y="778" width="1" height="1" fill="#aaa"/><path d="M816.5 762V766" stroke="#777" stroke-width="1"/><rect x="816.0" y="778" width="1" height="1" fill="#aaa"/><path d="M977 762V766" stroke="#777" stroke-width="1"/><rect x="976.5" y="778" width="1" height="1" fill="#aaa"/><path d="M1136 762V766" stroke="#777" stroke-width="1"/><rect x="1135.5" y="778" width="1" height="1" fill="#aaa"/><path d="M1290 762V766" stroke="#777" stroke-width="1"/><rect x="1289.5" y="778" width="1" height="1" fill="#aaa"/><path d="M1444.5 762V766" stroke="#777" stroke-width="1"/><rect x="1444.0" y="778" width="1" height="1" fill="#aaa"/><path d="M1756.5 762V766" stroke="#777" stroke-width="1"/><text x="44" y="780" font-size="14" fill="#444" font-weight="normal" text-anchor="middle" >Jul</text><text x="514" y="780" font-size="14" fill="#444" font-weight="bold" text-anchor="middle" >2023</text><text x="1444" y="780" font-size="14" fill="#444" font-weight="bold" text-anchor="middle" >2024</text><rect x="1530" y="761" width="80" height="24" fill="#555"/><text x="1570" y="778.5" font-size="14" fill="#fff" font-weight="normal" text-anchor="middle" textLength="72" lengthAdjust="spacingAndGlyphs" >2024-02-19</text><rect x="0" y="785" width="1813" height="20" fill="#e4e5e8"/><path d="M54.6 790V805" stroke="#b4b6ba" stroke-width="1"/><path d="M101.4 790V805" stroke="#b4b6ba" stroke-width="1"/><path d="M154.4 790V805" stroke="#b4b6ba" stroke-width="1"/><path d="M200.8 790V805" stroke="#b4b6ba" stroke-width="1"/><path d="M247.5 790V805" stroke="#b4b6ba" stroke-width="1"/><path d="M1614.7 790V805" stroke="#b4b6ba" stroke-width="1"/><path d="M1656.4 790V805" stroke="#b4b6ba" stroke-width="1"/><path d="M1708.7 790V805" stroke="#b4b6ba" stroke-width="1"/><path d="M1769.2 790V805" stroke="#b4b6ba" stroke-width="1"/><text x="17" y="803" font-size="14" fill="#888" font-weight="bold" text-anchor="start" textLength="21.6" lengthAdjust="spacingAndGlyphs" >10y</text><text x="71.4" y="803" font-size="14" fill="#888" font-weight="bold" text-anchor="start" textLength="14.6" lengthAdjust="spacingAndGlyphs" >1y</text><text x="119.7" y="803" font-size="14" fill="#888" font-weight="bold" text-anchor="start" textLength="18.9" lengthAdjust="spacingAndGlyphs" >1m</text><text x="171.4" y="803" font-size="14" fill="#888" font-weight="bold" text-anchor="start" textLength="13.6" lengthAdjust="spacingAndGlyphs" >7t</text><text x="219" y="803" font-size="14" fill="#888" font-weight="bold" text-anchor="start" textLength="12.7" lengthAdjust="spacingAndGlyphs" >1t</text><text x="264" y="803" font-size="14" fill="#888" font-weight="bold" text-anchor="start" textLength="66" lengthAdjust="spacingAndGlyphs" >Gehe zu...</text><text x="1488" y="803" font-size="14" fill="#888" font-weight="bold" text-anchor="start" textLength="56.8" lengthAdjust="spacingAndGlyphs" >17:49:00</text><text x="1550.8" y="803" font-size="14" fill="#888" font-weight="normal" text-anchor="start" textLength="47.7" lengthAdjust="spacingAndGlyphs" >(UTC+1)</text><text x="1630.8" y="803" font-size="14" fill="#888" font-weight="bold" text-anchor="start" textLength="10.7" lengthAdjust="spacingAndGlyphs" >%</text><text x="1674.2" y="803" font-size="14" fill="#888" font-weight="bold" text-anchor="start" textLength="18.7" lengthAdjust="spacingAndGlyphs" >log</text><text x="1725" y="803" font-size="14" fill="#3aaee0" font-weight="bold" text-anchor="start" textLength="28.8" lengthAdjust="spacingAndGlyphs" >auto</text><path d="M1800.76 796.70L1802.88 796.95L1802.88 799.65L1800.76 799.90L1800.38 800.82L1801.70 802.49L1799.79 804.40L1798.12 803.08L1797.20 803.46L1796.95 805.58L1794.25 805.58L1794.00 803.46L1793.08 803.08L1791.41 804.40L1789.50 802.49L1790.82 800.82L1790.44 799.90L1788.32 799.65L1788.32 796.95L1790.44 796.70L1790.82 795.78L1789.50 794.11L1791.41 792.20L1793.08 793.52L1794.00 793.14L1794.25 791.02L1796.95 791.02L1797.20 793.14L1798.12 793.52L1799.79 792.20L1801.70 794.11L1800.38 795.78ZM1795.61 798.3A0.01 0.01 0 1 0 1795.59 798.3A0.01 0.01 0 1 0 1795.61 798.3Z" fill="none" stroke="#888" stroke-width="1.3"/><circle cx="1795.6" cy="798.3" r="2.6" fill="none" stroke="#888" stroke-width="1.3"/>
</svg>
</body></html>
